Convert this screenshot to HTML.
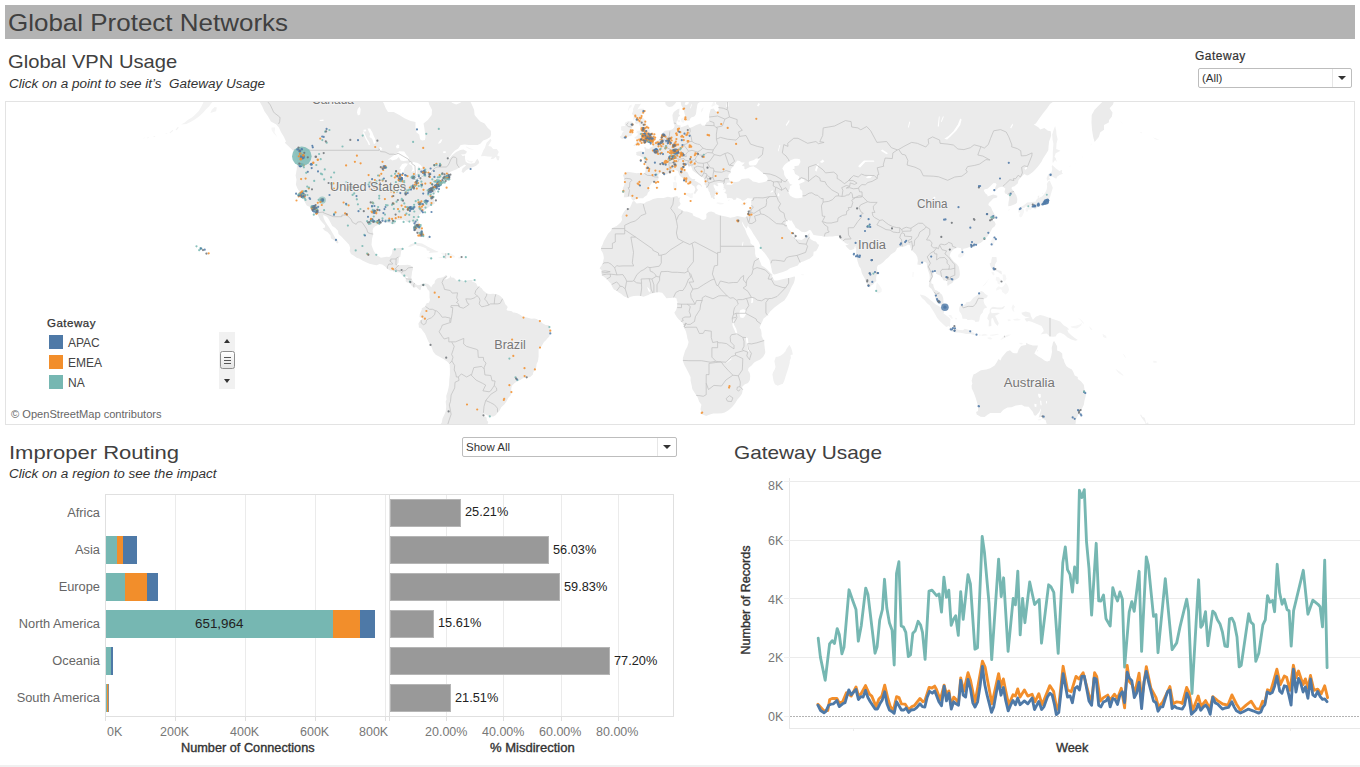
<!DOCTYPE html>
<html><head><meta charset="utf-8"><title>Global Protect Networks</title>
<style>
*{box-sizing:border-box;margin:0;padding:0}
html,body{width:1360px;height:767px;overflow:hidden;background:#fff}
body{position:relative;font-family:"Liberation Sans",sans-serif;color:#333}
.abs{position:absolute;white-space:nowrap;line-height:1}
#bar{left:5px;top:5px;width:1350px;height:34px;background:#b3b3b3}
#t1{left:7.5px;top:11.2px;font-size:24.5px;color:#404040;transform-origin:0 0;transform:scaleX(1.06)}
#t2{left:7.5px;top:53px;font-size:18.5px;color:#404040;transform-origin:0 0;transform:scaleX(1.09)}
#t2s{left:8.5px;top:78.2px;font-size:12.5px;font-style:italic;color:#333;transform-origin:0 0;transform:scaleX(1.078)}
#map{left:5px;top:101px;width:1350px;height:324px;border:1px solid #e3e3e3;background:#fff;overflow:hidden}
#gwl{left:1195px;top:50px;font-size:12px;color:#333;-webkit-text-stroke:0.2px #333;letter-spacing:0.5px}
.dd{border:1px solid #bdbdbd;border-radius:2px;background:#fff;font-size:11.5px;color:#333}
.dd .tx{position:absolute;left:3px;top:4px}
.dd .dv{position:absolute;right:18px;top:0;bottom:0;width:1px;background:#e6e6e6}
.dd .ar{position:absolute;right:5px;top:7px;width:0;height:0;border-left:4px solid transparent;border-right:4px solid transparent;border-top:4px solid #333}
#t3{left:8.8px;top:443.6px;font-size:18.5px;color:#404040;transform-origin:0 0;transform:scaleX(1.19)}
#t3s{left:9.3px;top:468.2px;font-size:12.5px;font-style:italic;color:#333;transform-origin:0 0;transform:scaleX(1.082)}
#t4{left:734px;top:443.6px;font-size:18.5px;color:#404040;transform-origin:0 0;transform:scaleX(1.124)}
.rl{font-size:12.5px;color:#666;text-align:right;width:95px;left:5px;transform-origin:100% 0;transform:scaleX(1.025)}
.al{font-size:12.5px;color:#777}
.at{font-size:12px;color:#333;-webkit-text-stroke:0.35px #333;transform-origin:0 0;transform:scaleX(1.06)}
.bl{font-size:12.5px;color:#222;transform-origin:0 0;transform:scaleX(1.02)}
#foot{left:0;top:765px;width:1360px;height:2px;background:#f0f0f0}
</style></head><body>
<div class="abs" id="bar"></div>
<div class="abs" id="t1">Global Protect Networks</div>
<div class="abs" id="t2">Global VPN Usage</div>
<div class="abs" id="t2s">Click on a point to see it’s&nbsp; Gateway Usage</div>
<div class="abs" id="gwl">Gateway</div>
<div class="abs dd" style="left:1198px;top:68px;width:154px;height:20px"><span class="tx">(All)</span><span class="dv"></span><span class="ar"></span></div>
<div class="abs" id="map">
<svg class="abs" style="left:-6px;top:-102px" width="1360" height="767" viewBox="0 0 1360 767">
<!--MS--><path fill="#f3f3f3" d="M211.8 109.8L214.7 107.1L216.9 107.6L216.1 111.3L210.4 112.9ZM204.7 84.3L203.3 102.8L201.6 106.0L199.0 110.8L194.8 115.0L191.9 117.5L187.7 120.1L184.8 122.6L181.1 124.5L186.3 124.0L190.5 122.1L194.8 119.6L199.0 116.5L203.3 112.4L206.1 109.2L209.0 106.6L211.3 103.3L213.2 101.1L213.2 84.3ZM216.9 84.3L217.5 100.6L218.9 101.1L221.8 99.4L223.2 84.3ZM175.5 129.8L177.7 127.0L178.9 127.4L176.6 130.3ZM169.5 132.7L172.6 129.8L173.2 130.8L170.3 133.2ZM164.9 134.1L167.5 132.7L167.2 133.6ZM152.4 136.9L155.3 136.0L155.0 136.9ZM146.5 138.3L148.5 137.1L148.5 138.0ZM143.1 138.3L144.8 137.4L144.5 138.3ZM1139.5 132.7L1142.0 132.2L1141.5 133.2ZM1152.8 137.4L1156.5 138.7L1159.4 139.6L1156.0 139.4ZM1120.2 121.1L1122.1 123.0L1122.7 124.0L1121.0 122.1Z"/>
<path fill="#f6f6f6" d="M466.4 159.4L469.8 161.1L473.2 161.1L471.8 162.9L468.1 161.7ZM466.1 146.4L473.2 149.4L474.1 149.9L468.9 149.0L466.1 147.2ZM271.5 127.4L275.2 127.4L274.6 132.2L277.2 136.9L273.5 133.2L271.5 129.8ZM437.8 257.4L439.7 258.3L442.2 258.0L445.7 259.2L447.6 257.8L449.9 257.7L450.8 257.1L454.2 257.8L455.2 256.7L454.2 255.4L452.5 254.5L450.5 253.5L448.5 253.0L445.7 252.9L442.5 252.7L440.8 253.0L442.5 254.5L442.8 255.8L443.8 256.8L441.1 256.9ZM426.8 257.5L429.2 256.9L432.6 258.0L432.6 258.7L430.0 259.2L427.2 258.0ZM458.4 256.9L462.8 257.4L462.1 258.4L458.4 258.6ZM473.5 280.0L476.1 279.6L476.1 281.6L473.5 281.6ZM426.9 237.1L428.3 236.7L428.9 239.6L427.8 240.5ZM206.0 253.2L206.6 251.7L208.7 252.9L209.5 253.9L207.6 255.3L206.4 255.1ZM204.1 249.6L205.6 249.6L206.1 250.3L204.7 250.6ZM199.6 247.7L200.7 247.3L201.5 248.5L200.2 248.5ZM195.3 246.0L196.5 245.6L196.8 246.5L195.9 246.8ZM680.9 119.1L682.6 117.8L684.3 117.0L685.2 119.1L684.6 121.1L684.0 122.6L682.9 122.8L681.2 121.6ZM677.2 120.1L679.8 120.1L680.1 122.1L678.3 122.3L677.5 121.3ZM700.8 112.4L701.4 109.2L703.1 107.6L703.6 107.4L702.8 110.3L701.6 111.9ZM711.3 105.5L712.4 103.9L713.3 101.7L714.7 102.2L715.6 104.9L713.3 106.0L711.9 107.1ZM629.5 105.5L631.8 104.4L631.5 107.1L629.5 108.2L628.3 111.3L628.1 109.2ZM684.6 194.3L686.0 193.2L687.4 192.8L690.6 193.6L693.7 192.5L692.6 195.4L692.8 197.2L692.3 198.2L690.3 197.9L687.7 196.1L685.4 195.2ZM672.7 182.5L675.5 181.4L676.9 182.9L676.9 186.3L676.6 189.2L675.2 189.2L674.7 190.3L673.2 189.6L673.2 186.6L673.2 184.0ZM676.1 174.9L676.4 176.4L676.1 179.1L675.5 181.0L674.4 180.3L673.8 178.7L673.8 177.2L674.9 176.0L675.8 175.8ZM716.1 203.1L717.6 202.3L720.4 202.8L722.7 203.0L724.1 203.5L722.7 204.2L719.8 204.4L716.4 203.3ZM741.1 204.2L742.8 203.5L744.8 203.0L747.7 201.7L746.0 204.0L744.8 204.7L743.1 205.6L741.4 205.2ZM656.0 187.9L657.9 186.4L659.2 187.4L658.2 188.8L657.0 188.3ZM714.7 190.1L716.1 190.3L718.1 191.4L719.3 193.2L717.8 192.8L715.9 191.4ZM728.1 200.2L729.6 199.1L729.2 200.7L728.4 201.0ZM722.8 189.2L724.4 188.5L724.9 189.8L723.2 189.9ZM1026.1 208.3L1027.8 207.3L1030.1 206.4L1031.8 206.9L1032.1 208.3L1030.7 210.0L1028.7 209.3L1027.2 211.9L1025.8 211.0L1025.5 209.3ZM1021.3 208.0L1023.6 209.0L1024.1 210.4L1024.1 211.7L1023.0 214.7L1021.8 216.7L1020.7 217.6L1020.1 216.7L1019.3 216.7L1019.3 214.4L1020.4 212.4L1019.3 212.4L1018.2 212.4L1017.9 210.4L1018.4 209.3L1019.9 208.8ZM1062.8 171.7L1065.0 169.0L1064.2 170.2ZM1067.0 167.8L1072.1 165.0L1069.9 166.6ZM1074.1 164.1L1077.0 162.1L1075.5 163.3ZM1081.2 158.8L1084.1 154.6L1082.6 157.1ZM1089.8 145.9L1092.6 142.4L1091.5 144.6ZM1007.8 210.0L1009.9 209.2L1009.9 210.0L1008.2 210.4ZM1042.0 193.6L1042.9 192.5L1043.2 193.6L1042.3 194.3ZM994.6 236.1L996.0 237.1L994.9 240.2L994.3 243.0L992.9 246.3L991.2 244.5L990.6 241.7L992.3 238.6L993.2 237.1ZM958.2 254.8L960.5 252.7L962.8 252.1L964.7 253.3L963.3 256.1L960.5 257.8L958.2 256.9ZM876.7 283.0L877.2 282.5L880.1 286.2L881.8 289.1L881.5 291.9L878.4 293.5L876.7 292.8L876.1 290.5L876.1 287.1L876.4 284.8ZM1005.7 282.5L1008.2 286.2L1009.1 289.7L1007.9 292.5L1005.7 294.5L1002.2 291.9L1001.7 289.7L1000.0 289.1L996.3 290.8L996.3 288.2L998.8 286.2L1001.1 287.4L1003.4 286.2L1004.5 284.8ZM1002.5 274.6L1005.4 274.6L1006.5 278.7L1005.1 281.3L1003.9 281.6L1002.8 279.3L1002.8 277.6ZM996.0 276.7L999.1 277.3L1000.3 279.6L1001.7 278.4L1000.5 281.9L999.4 284.5L997.7 283.6L997.1 280.7L995.7 280.4ZM982.4 286.6L984.6 283.9L987.5 280.7L989.2 278.1L988.0 280.4L985.5 284.2L983.2 286.2ZM991.2 271.7L993.7 272.0L994.6 274.4L993.4 275.5L992.0 273.8ZM969.6 330.4L973.3 330.1L973.3 331.0L969.9 331.0ZM948.3 315.0L951.1 315.0L952.8 317.8L952.2 319.3L950.0 317.3ZM955.1 317.8L957.1 318.1L956.8 319.5L955.1 319.3ZM974.7 333.8L978.1 334.1L976.7 335.6ZM978.9 334.4L980.9 334.4L980.4 335.8L978.9 335.6ZM981.2 334.7L984.6 333.8L987.5 334.7L987.5 335.6L981.8 336.1ZM990.0 334.7L993.2 334.4L998.3 333.8L998.8 334.4L993.2 335.8L990.0 335.6ZM987.5 337.6L990.3 337.3L992.6 339.0L990.3 339.6L987.5 338.4ZM1000.3 339.9L1003.1 336.7L1007.4 334.7L1011.1 334.4L1008.8 336.1L1004.5 337.9L1001.7 339.6ZM1070.7 326.4L1075.5 325.8L1079.8 324.4L1082.1 322.4L1081.2 325.5L1077.0 328.4L1072.7 328.1L1070.7 327.0ZM1077.8 317.8L1081.2 319.8L1084.1 323.2L1083.2 323.5L1080.4 320.1ZM1088.9 326.1L1092.0 329.0L1092.3 330.1L1090.3 329.2ZM1102.5 333.8L1106.2 336.1L1106.5 338.4L1103.1 337.0ZM1105.7 334.4L1107.9 337.3L1106.8 336.1ZM1011.6 307.6L1013.0 304.2L1015.0 306.8L1013.6 309.0L1014.5 311.9L1012.8 311.0L1011.9 309.0ZM1013.0 319.3L1017.3 318.4L1021.0 319.8L1018.7 320.4L1014.5 320.4ZM1007.4 319.5L1010.2 319.3L1010.8 320.7L1008.2 321.3ZM1115.3 368.8L1119.6 371.5L1123.8 375.5L1122.4 375.5L1118.2 372.7ZM1153.1 360.7L1156.5 361.0L1156.8 362.8L1153.4 362.8ZM1122.7 353.6L1124.4 355.0L1126.1 358.0L1124.4 356.5ZM912.7 271.7L913.6 272.3L913.3 277.3L912.5 277.0ZM800.8 274.5L804.2 274.4L803.4 275.2L801.4 275.1ZM1019.6 342.8L1023.0 343.1L1021.6 344.5L1019.6 343.9ZM1036.9 350.0L1038.3 350.0L1038.0 351.5L1036.9 351.2ZM1037.5 419.5L1040.3 418.8L1041.7 419.9L1038.6 420.6Z"/>
<path fill="#f0f0f0" d="M789.4 344.8L791.1 347.7L792.0 350.6L792.8 354.4L790.6 355.0L790.9 358.0L789.7 361.0L789.7 363.1L788.6 367.0L787.2 371.5L785.7 376.1L784.3 380.7L782.9 383.8L780.1 384.8L777.8 385.7L774.9 384.2L773.5 380.7L773.2 378.9L772.4 374.6L773.0 372.4L774.9 369.1L775.5 367.0L774.9 364.0L774.4 361.0L775.8 357.1L778.6 356.5L780.9 355.6L783.5 353.6L785.5 351.2L786.3 349.2L788.0 346.8ZM480.9 156.3L483.4 150.3L484.9 147.7L486.6 142.8L490.5 138.7L491.4 140.6L488.3 145.9L491.1 146.4L493.1 149.0L496.8 149.0L498.8 152.0L497.1 155.4L499.6 156.5L498.8 160.2L497.1 160.2L495.9 156.7L493.7 158.8L490.5 159.2L492.0 156.7L488.0 156.5L484.6 156.1ZM408.0 246.8L410.7 244.2L413.5 243.3L415.3 242.8L418.7 243.0L422.1 243.6L424.9 245.1L428.3 247.0L432.0 248.8L434.6 250.3L438.5 251.7L437.7 252.3L434.0 252.6L428.6 252.9L430.0 250.9L426.9 250.6L426.3 248.5L423.5 247.3L420.6 246.3L417.0 245.7L415.8 244.8L412.7 245.7L410.7 246.7ZM633.2 145.7L634.9 145.9L637.7 144.4L639.4 144.1L639.7 143.3L642.3 143.5L644.0 143.3L645.7 142.6L647.1 142.6L650.2 142.6L652.2 141.7L653.3 140.8L653.5 139.9L651.4 139.4L651.9 137.8L653.1 137.1L654.3 134.6L653.1 132.5L650.8 132.5L649.9 133.2L650.4 131.8L649.7 129.4L648.8 127.0L647.7 125.0L646.0 124.3L645.4 122.6L644.8 119.6L643.7 118.6L642.3 117.5L640.3 117.5L642.0 116.0L641.4 115.2L642.5 113.9L643.4 111.6L644.3 109.8L643.7 108.7L639.4 108.7L637.4 109.8L638.3 107.9L640.6 104.4L640.8 103.6L639.4 103.9L635.2 103.9L634.3 106.0L632.9 109.2L633.2 110.8L631.8 113.9L633.7 115.5L633.2 121.1L634.3 119.1L635.4 118.0L636.0 120.1L634.9 123.0L636.9 124.0L639.1 123.0L639.4 125.0L640.3 127.0L641.1 127.0L640.7 128.4L640.6 130.3L639.7 130.6L637.4 130.8L636.3 130.3L636.9 131.8L636.0 133.2L637.7 132.7L637.7 135.0L636.0 136.4L634.3 137.4L634.9 138.5L637.1 138.7L638.6 138.7L640.3 139.4L641.7 138.7L640.8 140.3L639.1 140.6L637.4 140.6L636.4 141.5L635.7 143.3L634.3 144.8ZM631.8 130.6L632.3 132.7L631.3 136.0L629.5 136.2L625.8 137.8L622.4 139.2L620.4 137.8L619.8 136.4L621.5 135.5L621.8 134.1L622.7 132.2L623.8 131.3L621.0 130.3L621.2 127.9L621.0 126.5L623.2 126.0L625.2 126.0L624.6 124.3L625.2 122.6L628.3 121.1L630.9 121.6L632.3 121.6L633.2 123.5L633.7 125.0L632.6 127.0L632.0 127.4L631.8 128.9ZM1049.7 180.6L1051.4 184.4L1052.8 187.7L1051.4 192.5L1050.0 197.2L1048.8 199.6L1049.7 201.7L1048.3 203.5L1046.8 204.5L1046.6 203.1L1046.6 202.1L1046.0 203.5L1044.6 203.8L1044.0 205.6L1042.9 204.2L1042.0 205.6L1039.2 205.6L1038.3 204.2L1037.5 205.6L1038.3 206.6L1036.6 208.0L1035.2 209.5L1033.2 208.0L1033.5 206.6L1034.1 205.4L1032.1 205.2L1030.1 205.6L1027.2 206.6L1025.5 206.4L1024.4 208.0L1021.6 207.8L1021.3 206.2L1022.7 206.1L1024.7 204.5L1027.2 202.4L1030.7 202.3L1033.5 201.7L1035.5 201.7L1036.1 200.0L1037.8 198.2L1037.8 196.1L1039.5 195.4L1038.6 197.9L1042.0 196.4L1044.0 194.3L1045.7 191.8L1046.8 189.2L1047.1 186.6L1046.8 184.0L1048.0 181.8ZM1047.1 181.0L1049.1 179.5L1050.5 179.5L1048.6 176.8L1050.0 176.8L1052.0 176.4L1056.2 178.7L1057.1 176.8L1059.6 174.9L1063.0 173.7L1061.9 172.5L1062.2 169.8L1059.4 171.0L1055.7 168.2L1052.8 165.4L1052.5 165.0L1051.7 166.2L1052.2 169.0L1051.7 171.4L1050.8 173.7L1048.6 173.7L1047.7 175.6L1046.6 178.0ZM1052.8 163.3L1055.1 160.0L1056.8 162.1L1055.7 158.0L1054.5 156.7L1055.7 153.3L1060.5 150.7L1056.2 149.0L1056.5 143.7L1057.6 139.2L1056.5 134.6L1056.2 130.8L1055.1 126.0L1053.7 129.8L1052.2 134.6L1052.5 139.2L1053.4 143.7L1053.1 148.1L1052.8 152.5L1052.8 156.7L1052.5 160.5ZM992.0 256.9L995.7 256.9L996.6 257.2L996.8 261.4L994.9 264.4L994.9 267.3L996.0 269.7L998.5 270.3L1001.4 270.9L1002.0 274.4L999.7 273.2L997.4 271.4L995.4 271.1L993.2 271.1L992.0 269.7L992.9 268.5L991.2 267.9L990.0 265.0L989.7 263.5L991.2 262.6L991.4 259.9ZM960.9 304.5L962.8 305.6L965.6 303.9L965.9 302.5L970.4 301.4L973.3 297.7L976.1 296.1L978.9 293.4L980.9 290.7L983.5 291.9L984.9 293.8L988.0 295.7L986.3 297.9L984.3 298.5L983.5 300.8L984.6 304.2L987.2 307.6L984.3 308.5L983.2 310.4L982.6 312.7L980.6 314.7L979.8 317.6L979.5 319.8L978.9 321.5L975.3 322.1L974.7 320.4L971.8 319.8L967.6 320.1L966.7 319.0L964.5 318.7L962.5 318.7L961.9 315.6L960.8 313.3L959.3 311.3L959.1 308.2L959.9 305.9ZM920.1 294.5L925.0 295.7L927.8 297.7L929.8 299.6L932.9 301.9L935.8 304.5L937.7 305.6L941.2 307.6L943.1 309.0L944.3 311.9L943.4 313.3L946.3 315.6L948.3 317.0L950.5 319.0L950.2 322.4L950.0 327.0L948.5 326.1L946.3 327.0L943.4 324.4L940.0 321.3L937.2 318.1L934.6 313.3L932.6 309.9L930.6 307.0L929.8 305.5L927.0 303.3L924.4 299.9L922.1 298.2L920.4 295.7ZM948.3 329.8L950.5 327.2L952.8 327.8L956.2 328.4L957.9 329.7L963.0 330.2L964.7 328.7L969.3 330.1L972.7 332.4L974.4 332.7L974.7 335.3L970.4 334.1L966.2 334.1L961.9 333.0L958.5 332.4L955.4 332.4L951.7 331.5L949.1 330.0ZM988.6 326.4L988.9 321.8L988.9 320.4L987.2 318.4L988.3 314.7L989.7 312.7L989.7 309.9L990.9 307.9L992.9 306.8L997.4 307.6L1001.7 307.6L1003.9 306.2L1005.1 305.9L1003.1 309.0L1000.3 309.6L994.6 309.0L991.7 309.0L990.6 311.0L991.7 313.3L994.6 313.0L997.4 312.7L1000.0 313.0L997.4 314.7L995.1 315.8L996.8 319.0L997.4 320.4L998.8 323.2L997.7 326.1L995.7 324.1L994.6 322.4L993.2 319.0L992.9 318.1L991.4 318.4L991.2 321.8L991.4 326.1ZM1021.3 312.7L1025.8 311.6L1030.1 312.7L1030.9 316.1L1032.9 319.8L1035.8 316.7L1040.0 315.0L1043.7 315.8L1049.1 317.8L1052.8 319.0L1057.4 320.4L1060.2 321.5L1063.6 325.2L1067.0 327.2L1069.3 329.5L1067.3 329.8L1068.4 332.4L1071.3 335.3L1074.1 337.6L1077.8 339.9L1075.5 340.7L1071.3 339.6L1067.6 337.6L1064.2 334.4L1059.9 332.4L1057.1 334.1L1055.7 336.4L1052.8 336.7L1050.0 336.4L1046.6 333.5L1042.9 334.1L1040.6 334.4L1043.7 331.0L1043.2 329.0L1041.5 326.1L1035.8 323.5L1031.5 321.8L1028.7 321.0L1026.7 321.8L1024.4 318.7L1028.7 317.6L1029.8 317.0L1025.3 316.7L1022.4 314.7ZM1140.0 414.8L1141.2 414.7L1142.3 416.7L1144.6 417.8L1145.4 420.2L1146.3 423.4L1148.0 422.3L1149.1 425.5L1150.8 426.3L1155.1 425.9L1156.2 427.3L1152.3 434.6L1145.7 434.6L1145.7 425.5L1145.2 422.3L1143.5 420.2L1141.7 417.8L1140.9 416.4Z"/>
<path fill="#ebebeb" d="M259.3 84.3L259.3 101.1L262.1 106.0L264.4 111.3L268.1 116.5L270.9 121.6L276.3 124.5L278.9 127.4L281.1 132.2L284.0 136.9L286.0 141.5L284.8 142.8L291.4 149.0L294.5 152.0L295.1 152.9L296.8 159.2L297.1 162.1L296.8 169.0L295.6 175.6L296.5 179.5L295.9 184.8L297.6 188.8L299.9 192.5L301.3 194.3L301.6 196.4L303.0 198.6L304.7 201.7L306.7 205.6L310.7 207.3L313.0 208.3L316.1 211.0L316.7 212.7L318.1 215.4L320.1 219.7L322.6 222.7L324.9 225.3L325.2 227.5L322.6 228.2L324.6 230.4L327.5 232.0L330.6 235.5L330.9 238.3L334.0 240.2L336.0 242.3L337.1 243.6L338.5 242.7L337.7 240.2L336.0 239.2L334.8 237.1L333.1 233.9L331.2 230.7L329.2 227.5L326.9 224.3L324.9 221.0L323.5 217.7L323.2 215.1L326.9 216.7L328.3 218.4L330.6 222.7L332.3 225.9L335.1 227.8L338.0 230.7L338.5 233.9L341.4 236.4L343.9 239.2L346.8 242.3L349.1 244.8L350.2 247.9L349.6 250.9L351.0 253.9L353.9 255.8L356.7 257.8L359.6 258.7L362.4 260.5L365.5 262.0L369.5 263.8L373.8 264.7L376.6 265.3L379.5 264.1L382.3 264.4L385.1 266.5L387.4 268.8L390.0 270.6L393.7 271.1L396.5 272.3L399.9 272.6L400.8 273.5L402.2 275.2L404.5 277.3L405.9 279.0L405.6 281.3L407.0 282.5L408.7 282.8L410.7 284.2L411.8 285.9L413.5 287.1L414.1 287.6L416.4 287.1L417.8 288.5L419.5 289.9L420.9 289.7L421.2 287.1L423.2 285.1L426.3 286.5L427.2 288.8L428.0 289.9L429.7 285.6L428.0 283.9L425.2 283.3L422.4 283.6L419.8 285.1L417.8 285.3L415.8 284.2L414.7 283.0L413.3 281.9L411.8 279.6L411.3 277.6L411.8 274.6L412.1 271.7L413.0 268.8L412.7 267.3L410.7 265.6L407.9 264.7L405.0 265.0L402.2 265.0L399.3 265.3L396.8 264.7L398.5 262.9L398.8 259.9L399.1 257.2L400.2 256.9L400.8 253.9L401.0 251.5L402.7 248.8L401.6 247.9L397.9 247.9L394.5 248.5L392.5 249.4L392.2 252.4L391.4 254.8L389.4 256.9L386.6 256.7L383.7 257.2L380.9 257.8L378.9 256.4L376.9 255.4L375.8 253.9L373.8 250.9L372.6 247.9L371.5 244.8L371.8 241.7L372.1 238.6L372.9 235.5L373.2 233.9L372.6 230.7L373.2 228.2L375.2 226.2L378.0 224.9L380.0 223.3L382.6 222.0L385.1 222.0L388.0 222.7L390.0 223.3L392.2 224.0L395.4 224.3L394.8 221.4L395.1 220.4L397.9 220.0L400.8 220.0L403.6 219.7L405.9 220.7L407.0 222.0L409.3 221.4L410.7 220.7L412.1 222.0L414.1 224.3L414.4 227.5L414.7 229.1L416.1 231.7L417.0 233.6L418.7 236.4L419.5 236.7L420.9 236.4L421.8 234.5L422.1 231.4L420.9 228.2L420.4 225.9L419.2 223.3L418.1 219.7L418.4 216.4L419.5 214.4L422.4 212.0L424.9 209.7L427.8 208.0L430.6 205.6L432.0 205.2L434.9 203.5L434.0 200.0L433.4 197.5L432.6 195.4L432.3 191.8L432.9 192.5L433.7 196.1L434.6 193.9L436.0 191.8L436.0 190.7L434.9 188.5L436.6 189.9L437.7 188.8L439.1 185.5L439.1 184.0L442.0 183.6L444.8 182.5L446.2 181.0L448.8 180.3L450.5 179.9L450.5 178.7L448.5 177.6L448.2 176.0L448.8 174.1L449.9 172.1L453.3 170.6L456.2 169.4L459.0 167.8L461.8 166.2L464.7 164.5L466.1 165.4L462.4 168.6L461.6 171.7L463.3 172.9L466.1 170.2L468.9 168.6L473.2 167.0L476.1 165.8L478.9 163.3L479.2 162.1L477.8 159.2L477.2 158.8L474.6 162.9L473.5 163.3L470.4 163.7L467.5 162.9L465.8 161.7L465.0 158.8L465.0 155.4L462.7 155.9L461.0 154.6L464.7 154.2L466.4 152.9L466.7 151.2L463.3 149.4L460.4 149.9L456.2 152.0L451.9 155.4L449.1 158.8L447.1 159.6L450.5 155.9L451.9 153.7L454.7 150.7L458.2 148.6L460.7 145.0L464.7 144.6L468.9 145.0L473.2 145.0L477.5 145.0L480.3 143.7L483.2 140.6L486.6 139.2L490.3 136.9L491.1 134.6L490.8 130.8L487.4 127.4L484.6 123.5L480.3 121.6L477.5 118.6L474.6 115.0L474.1 109.8L471.8 104.4L468.9 98.9L466.1 94.4L463.3 98.9L460.4 102.8L456.2 104.4L451.9 102.8L450.5 98.9L451.9 93.2L447.6 88.5L427.8 84.3L429.2 93.2L427.8 98.9L429.2 104.4L432.0 109.8L431.7 115.0L427.8 120.1L423.5 123.5L424.3 127.4L424.9 132.2L425.5 136.9L424.9 140.1L422.1 140.6L420.1 139.2L419.2 134.6L416.4 132.2L415.5 127.4L415.5 122.1L410.7 121.1L405.0 118.6L399.3 115.0L393.7 111.9L388.0 111.9L385.7 108.2L383.7 103.3L380.9 98.9L380.0 93.2L380.0 84.3ZM428.0 289.9L429.7 285.6L431.2 287.6L432.6 284.8L434.6 283.3L434.9 280.7L436.8 278.7L438.5 278.1L442.0 277.6L444.2 276.4L445.9 274.9L447.4 276.1L446.8 277.6L445.1 279.0L445.9 279.6L447.1 279.0L449.6 277.8L450.5 275.5L451.3 277.6L453.9 277.8L455.6 279.6L456.2 280.4L459.0 280.2L461.8 280.2L464.7 281.6L466.1 281.3L467.5 280.2L470.4 279.9L473.2 279.9L471.8 281.3L473.5 281.9L476.1 283.3L476.6 284.2L477.5 286.2L479.5 286.8L481.7 288.2L483.2 290.5L486.0 292.8L487.4 293.7L490.3 293.9L493.1 293.7L495.9 294.2L498.8 295.1L500.8 296.5L502.5 298.2L503.9 300.5L505.3 304.2L507.3 306.2L507.6 307.6L506.5 309.6L507.3 310.4L510.1 311.0L511.9 311.3L513.0 312.4L514.4 312.4L517.3 313.3L520.1 314.7L522.9 316.7L523.5 317.6L525.8 317.3L528.6 318.1L531.5 318.7L534.3 318.4L536.6 319.0L540.0 321.0L542.8 323.5L545.7 325.0L549.1 325.2L549.6 327.5L550.5 330.7L550.2 333.5L549.1 336.7L547.7 338.1L545.7 340.5L544.0 341.9L543.1 343.6L541.4 346.5L540.0 347.7L538.6 349.2L538.6 353.0L538.6 356.5L538.0 361.0L536.6 364.0L536.3 367.3L534.9 369.4L533.2 372.4L532.9 374.6L530.0 377.3L526.6 377.6L522.9 378.2L520.4 380.1L517.8 380.7L514.4 383.2L511.9 385.7L511.3 388.6L511.3 392.1L510.7 395.3L508.2 397.9L506.7 400.9L504.5 404.2L501.3 407.2L499.6 410.5L497.6 412.6L495.9 415.0L493.4 416.4L489.7 416.4L486.0 414.7L483.4 413.3L483.4 415.3L486.6 417.4L486.8 420.2L488.3 422.0L487.4 424.5L486.0 427.3L481.7 429.9L473.2 431.0L473.2 438.4L440.5 438.4L440.5 431.0L441.4 424.5L440.3 424.5L441.7 422.7L442.5 418.5L444.2 415.0L445.7 411.6L445.9 409.9L446.2 406.5L445.7 401.5L446.5 399.5L446.2 396.0L447.6 391.8L448.5 387.9L449.1 384.5L449.3 379.5L449.9 374.6L449.9 369.1L449.6 364.0L446.8 361.3L443.4 358.9L439.1 356.5L435.7 354.7L432.9 351.2L432.6 350.0L431.2 346.3L430.3 344.8L428.6 341.9L427.2 339.0L426.0 336.1L424.9 333.5L422.9 331.0L421.2 328.4L418.9 327.5L418.7 325.2L418.4 323.5L419.5 321.8L420.9 320.1L422.1 319.0L422.4 316.7L421.2 317.8L419.5 317.0L419.8 313.9L420.9 311.6L421.8 309.6L421.8 308.2L423.2 307.6L425.2 306.5L425.5 305.3L426.6 303.3L428.9 302.8L430.0 299.9L429.5 297.7L429.5 294.8L429.5 291.9L428.9 290.5ZM632.6 201.4L634.3 201.0L636.6 203.5L640.8 203.1L643.7 203.8L646.5 201.7L649.7 200.7L653.1 198.9L657.9 197.9L663.6 197.9L667.8 196.8L671.5 197.5L674.9 196.4L677.2 196.1L678.6 197.9L680.6 197.2L679.5 199.3L679.5 201.4L680.6 203.5L680.1 205.2L677.8 206.9L678.1 208.3L680.6 209.3L682.3 210.7L684.9 211.4L686.9 211.4L690.0 212.4L692.6 213.4L693.1 215.4L696.2 217.1L699.1 218.1L701.9 219.7L703.9 220.0L706.2 218.4L706.5 216.1L706.2 214.1L708.5 212.0L711.3 211.4L714.4 212.4L715.6 213.7L717.6 214.4L720.4 215.4L723.2 216.1L726.9 216.7L730.3 217.7L734.3 217.1L737.4 216.1L741.1 216.7L741.8 221.2L742.0 222.7L743.1 225.9L744.8 228.5L745.7 230.7L746.8 233.9L748.5 237.1L750.2 240.2L750.5 243.3L753.1 245.4L754.2 246.3L755.1 249.4L755.1 253.6L755.9 256.9L758.8 258.4L760.7 262.9L761.6 265.6L764.4 267.3L766.4 268.8L768.7 271.1L771.0 273.5L772.4 274.6L772.1 277.3L773.0 278.1L774.4 280.4L777.2 280.4L781.5 279.6L785.7 278.4L790.0 277.8L794.3 276.4L795.1 276.7L794.6 280.4L793.7 283.3L791.4 287.6L789.4 291.9L787.2 296.2L784.3 300.5L780.1 303.3L778.1 304.8L774.4 307.6L770.4 311.3L767.3 315.3L765.6 317.0L763.6 318.4L762.2 321.8L760.7 324.7L759.6 327.5L761.0 329.8L761.6 333.3L761.6 336.1L763.0 339.0L764.2 340.5L764.4 344.8L764.7 347.7L765.3 352.1L765.0 353.6L763.0 357.1L760.2 359.5L755.9 361.6L754.2 362.5L751.6 365.5L748.5 367.9L748.0 370.6L749.7 373.0L750.2 376.1L749.9 380.1L748.0 382.9L744.5 384.5L742.0 387.0L742.8 389.5L742.0 393.4L740.3 396.3L737.4 399.5L735.2 403.2L732.6 406.5L728.9 409.9L724.7 412.6L722.1 413.3L717.6 413.6L713.3 413.6L709.0 414.7L706.2 416.0L703.3 414.7L701.6 414.3L701.6 412.9L700.5 409.2L701.4 404.8L699.1 401.5L697.7 397.6L696.2 395.3L694.0 391.8L692.3 388.9L691.7 385.4L690.6 380.7L690.6 377.3L688.6 373.0L686.3 368.5L684.3 364.8L682.9 361.0L682.9 358.0L684.0 354.2L685.2 350.6L687.4 346.5L688.6 341.9L687.4 338.4L686.9 335.6L686.0 331.8L684.3 327.8L683.7 324.7L682.9 323.5L680.9 321.3L678.3 319.0L676.6 316.7L674.9 313.9L674.4 312.4L675.8 310.4L676.4 309.3L676.9 307.3L677.2 304.2L677.5 301.9L676.6 299.9L676.9 298.8L674.7 297.7L673.5 297.4L670.7 297.9L669.3 297.9L666.4 298.2L664.4 295.4L662.2 292.8L659.0 292.2L656.2 292.5L652.8 293.1L649.4 294.2L648.8 294.8L644.3 296.5L643.4 296.8L640.8 295.9L638.0 295.7L633.7 295.9L630.6 296.8L628.1 297.9L623.8 296.2L621.0 293.7L618.7 292.5L616.7 290.8L613.9 289.4L611.9 286.2L611.6 283.9L610.4 283.3L608.2 280.7L606.7 279.0L603.9 276.7L601.9 274.9L601.6 272.3L601.6 270.3L599.6 268.2L601.1 265.9L602.5 264.4L603.1 261.4L603.9 258.1L603.3 254.5L602.5 252.4L600.8 249.7L601.3 247.0L602.5 244.8L603.9 241.1L605.3 238.6L607.0 235.5L608.2 233.6L611.0 230.7L611.9 228.5L612.7 227.7L616.7 225.9L619.5 223.6L621.0 222.0L622.1 219.7L621.5 216.4L622.9 213.4L625.2 210.0L627.8 209.0L630.0 207.6L631.5 204.2ZM1132.4 78.2L1118.2 90.3L1115.3 96.1L1113.0 104.4L1109.6 108.2L1112.5 112.4L1111.9 116.5L1109.1 120.1L1108.8 122.6L1104.0 125.0L1104.0 129.8L1100.3 132.2L1098.8 136.9L1094.6 141.9L1093.2 136.9L1092.0 129.8L1091.5 122.6L1091.7 115.0L1094.6 109.8L1098.3 106.0L1102.5 101.7L1105.4 96.1L1106.8 90.3L1095.4 87.3L1089.8 98.3L1087.5 100.0L1082.6 101.7L1079.2 99.4L1072.7 98.3L1064.2 99.4L1055.7 100.0L1050.0 103.9L1047.1 108.2L1042.9 113.4L1040.0 117.5L1035.8 123.5L1033.8 124.5L1038.6 127.4L1040.3 129.4L1044.3 127.9L1048.0 130.8L1050.8 131.3L1051.1 135.5L1050.5 137.8L1049.1 141.5L1048.6 145.9L1048.3 150.3L1045.7 154.6L1042.9 158.8L1041.5 161.7L1038.6 165.8L1035.8 169.0L1032.9 172.1L1028.7 174.9L1027.0 175.6L1024.4 174.1L1021.6 176.4L1020.7 177.6L1018.4 180.6L1017.9 183.3L1014.5 186.3L1011.9 187.0L1011.6 188.8L1014.2 191.8L1016.4 195.4L1017.3 198.9L1017.0 202.4L1015.9 203.8L1013.0 204.9L1010.2 205.9L1008.2 206.2L1008.5 202.4L1009.1 198.9L1009.1 196.1L1007.4 194.3L1005.1 193.6L1004.5 191.4L1005.4 188.8L1002.8 186.6L998.8 187.4L996.0 189.9L994.0 190.7L995.1 188.1L996.6 184.4L995.4 182.9L993.2 183.3L990.3 186.3L987.5 188.8L984.6 189.2L983.8 190.7L985.5 193.6L987.5 195.0L987.5 196.4L990.3 195.4L993.2 194.6L997.4 195.7L997.1 197.5L993.2 198.6L991.2 200.7L988.9 203.1L988.3 204.9L990.9 206.9L992.6 211.0L994.6 214.4L995.7 216.1L995.4 218.1L993.2 219.1L991.7 220.0L994.6 221.4L995.7 224.3L994.6 226.6L992.3 228.2L990.9 231.0L989.2 233.9L987.5 236.4L985.2 238.6L982.4 241.4L980.4 243.0L977.0 244.2L974.1 245.1L971.8 245.7L969.0 247.3L966.2 248.2L963.3 248.8L962.8 251.2L961.3 250.6L961.0 248.2L957.6 247.6L956.2 247.9L953.4 249.4L952.5 250.3L950.5 253.0L949.7 256.1L951.7 259.0L953.9 261.7L956.8 264.1L958.8 266.7L959.6 270.9L959.9 274.6L959.1 277.6L956.5 279.3L953.7 280.7L952.5 282.8L949.1 284.8L947.7 285.9L947.1 283.3L947.7 281.6L946.3 280.7L943.4 280.2L942.0 277.6L940.0 275.5L937.7 274.4L936.0 273.8L936.0 272.0L934.9 271.7L933.5 272.3L933.3 274.6L932.9 276.7L931.5 279.6L931.2 283.3L933.2 284.2L933.5 286.2L934.9 289.7L937.7 291.1L939.7 292.8L942.0 294.8L943.1 297.4L943.4 299.6L943.4 302.8L944.9 304.8L945.7 306.5L944.3 306.8L943.1 306.2L940.6 304.5L937.5 302.2L935.5 299.1L934.6 295.4L934.3 292.8L932.6 290.8L931.5 288.8L929.8 287.6L928.7 286.2L929.2 283.0L929.5 281.0L929.8 277.6L929.5 274.6L928.1 270.6L927.0 266.5L926.7 262.9L924.7 261.7L922.7 262.6L920.4 265.0L917.3 264.4L917.9 260.5L917.3 256.9L915.6 253.9L913.3 251.8L911.6 250.0L910.5 247.9L910.2 245.4L907.9 244.5L906.5 245.4L905.1 246.3L902.2 247.0L900.0 247.0L897.1 247.9L896.3 250.0L895.1 251.8L893.1 253.0L890.9 254.5L888.3 257.5L886.0 259.3L883.2 262.3L880.1 264.4L878.1 265.0L876.9 267.3L877.2 270.3L877.5 272.9L876.4 276.1L876.1 279.0L876.4 281.0L874.4 282.5L873.8 283.9L871.5 285.3L869.7 287.4L867.9 286.2L866.1 282.2L864.7 278.4L862.5 274.6L861.9 273.2L860.8 268.8L859.0 265.9L857.6 261.4L856.5 256.9L856.2 255.4L855.9 252.4L856.2 249.1L855.4 247.3L855.6 245.4L854.5 247.0L854.2 249.1L851.1 250.0L849.4 249.7L847.1 247.6L845.4 245.4L848.2 244.5L849.1 243.6L847.4 243.9L845.1 243.0L843.7 241.4L842.9 240.8L841.1 239.9L839.7 237.7L838.6 236.1L835.5 236.1L832.6 236.4L829.8 236.4L826.4 236.7L824.1 236.7L821.5 236.1L818.4 235.8L815.6 235.2L813.6 234.9L811.9 232.3L811.0 230.4L809.3 230.1L807.1 231.4L804.8 232.3L801.4 231.7L798.8 229.5L795.7 227.8L794.3 224.9L792.8 222.7L791.7 220.4L790.0 220.7L788.6 219.7L787.4 221.0L785.7 221.4L785.6 223.0L786.3 224.6L787.2 226.2L788.0 228.5L790.3 230.7L791.7 232.3L792.0 234.9L793.7 237.7L793.7 235.5L794.3 233.6L796.0 234.5L796.0 237.1L795.1 238.6L796.0 239.6L798.8 239.6L801.7 239.9L803.9 238.6L806.5 236.1L808.5 233.9L809.6 232.6L809.3 235.2L809.6 237.4L810.7 239.2L813.6 241.1L815.9 241.4L817.8 244.2L819.3 244.8L817.8 248.2L816.1 250.9L813.6 251.8L813.3 255.4L809.9 258.4L806.5 259.9L803.1 261.4L799.9 262.6L797.7 265.6L794.3 266.7L790.0 268.2L787.2 270.3L782.9 272.0L778.6 273.2L777.2 273.8L774.4 274.4L773.0 274.1L772.1 272.3L771.5 268.8L771.3 267.9L770.7 265.3L770.1 262.9L769.5 259.9L767.8 257.5L766.1 255.1L764.4 252.7L761.9 250.3L760.7 247.9L759.9 244.8L758.2 241.1L757.3 239.9L755.1 236.4L753.4 233.9L751.6 230.7L750.2 228.8L748.8 227.2L748.2 225.9L748.8 222.7L748.0 224.9L747.1 227.5L746.7 228.4L744.8 226.6L743.7 224.6L742.3 222.0L741.8 221.2L741.1 216.7L744.5 217.4L746.5 216.7L748.2 214.1L748.8 211.7L750.2 208.0L751.4 205.2L751.1 202.4L751.4 200.7L752.2 198.6L750.2 198.6L747.7 197.9L745.1 200.0L742.6 200.7L740.3 198.9L736.6 197.5L736.0 199.6L733.7 200.0L732.0 198.2L729.5 197.9L727.2 198.2L726.9 197.2L726.6 193.9L724.1 192.5L725.5 191.8L725.8 189.9L724.9 188.8L723.5 188.1L723.8 186.3L723.2 184.0L723.0 183.3L720.4 182.9L718.7 182.9L717.0 183.6L718.4 185.5L717.3 186.3L715.9 185.5L714.7 184.4L713.6 184.8L713.6 186.3L714.4 188.1L715.3 189.6L714.4 190.3L716.1 191.8L717.6 192.8L717.7 194.8L716.4 193.9L714.7 193.9L715.3 195.4L715.0 196.1L714.1 195.4L714.7 197.9L715.0 199.1L713.3 198.9L712.2 197.2L711.0 197.9L710.7 195.4L709.9 194.3L709.9 192.8L709.3 192.1L708.5 190.7L708.2 188.8L706.8 187.7L706.2 187.0L705.9 185.5L704.5 184.4L704.5 181.4L704.5 179.1L703.1 177.6L700.8 176.4L698.5 174.5L696.0 172.9L694.5 172.1L692.6 170.6L691.7 167.8L690.3 165.8L688.9 167.8L688.0 165.0L686.3 164.1L684.3 165.4L684.3 169.0L685.2 171.0L687.7 172.5L689.1 176.0L691.1 178.3L692.6 179.1L695.4 179.1L694.5 180.6L697.4 182.1L700.5 184.0L701.9 185.9L701.6 187.0L700.2 185.1L698.2 184.4L696.5 186.3L696.5 188.1L698.0 189.9L696.5 191.8L695.1 193.9L693.8 193.2L694.5 191.4L695.4 189.2L694.3 186.3L692.0 185.1L691.4 184.0L690.0 183.3L688.3 181.8L685.2 181.0L684.0 179.5L682.6 178.0L680.9 176.8L679.2 174.9L678.6 172.9L677.8 171.0L674.7 169.4L672.7 171.4L670.7 171.7L669.0 172.9L667.0 174.5L664.7 173.7L662.4 173.3L660.4 172.9L658.5 174.5L658.2 176.8L658.5 179.1L655.6 181.4L652.8 182.1L651.4 183.6L649.4 186.6L648.5 188.5L649.9 190.7L647.9 192.5L647.1 195.0L644.0 197.2L643.1 198.2L640.8 198.2L636.9 198.2L634.3 200.3L633.5 200.7L631.5 198.9L631.2 197.2L629.5 196.4L626.9 197.2L623.8 197.2L624.4 193.6L623.2 191.0L622.7 188.5L624.1 185.5L624.6 182.1L624.1 178.3L622.9 174.9L625.5 173.3L627.5 171.7L632.3 172.5L636.6 173.3L638.6 172.9L640.8 173.3L644.3 173.3L645.1 172.9L645.7 169.0L646.0 165.0L646.2 164.5L646.0 162.1L644.3 160.9L643.1 158.0L641.4 156.7L639.7 155.9L637.1 155.4L636.0 154.2L636.6 152.9L635.7 152.5L638.3 151.6L640.8 151.2L643.7 151.8L645.1 151.8L644.8 149.4L644.0 147.2L645.7 147.2L646.2 148.6L649.4 149.0L649.7 148.1L652.5 146.4L653.9 145.0L653.9 142.8L654.8 141.5L657.6 140.6L659.6 139.6L660.7 136.9L662.4 134.6L663.0 132.2L665.0 130.8L669.0 130.3L672.1 129.4L673.8 127.9L674.7 126.0L673.8 123.0L672.9 120.1L672.4 115.0L673.8 111.9L677.5 109.2L679.5 108.4L679.2 112.4L678.6 113.9L680.3 115.5L678.3 117.0L677.5 120.1L676.6 121.6L676.4 123.5L677.8 125.0L680.6 125.5L680.3 127.4L683.5 126.5L686.3 125.5L688.0 124.5L689.7 127.9L693.4 126.5L696.2 125.0L700.5 123.5L702.2 125.5L704.8 125.5L705.9 124.0L706.2 122.8L709.0 121.1L709.3 119.1L709.0 115.0L710.2 110.8L710.7 109.2L713.6 108.4L715.3 110.8L717.6 112.1L718.7 109.8L718.7 105.5L716.1 103.9L716.1 100.6L719.0 98.9L723.2 98.3L728.9 97.8L734.6 96.1L734.6 78.2ZM662.2 78.2L663.6 90.3L663.6 96.1L664.4 100.0L665.3 102.2L665.6 104.4L667.8 106.6L669.3 107.1L672.1 106.6L674.4 104.4L676.6 101.7L679.2 100.6L679.5 96.6L680.6 101.1L681.2 104.9L683.2 108.7L684.3 112.4L685.4 116.5L685.4 117.5L686.3 120.1L687.2 120.8L689.7 120.6L690.0 119.1L691.1 117.5L693.7 116.8L694.8 116.0L696.0 113.9L696.5 109.8L696.8 108.2L697.4 104.4L698.0 103.3L700.5 101.7L701.9 100.0L703.1 97.2L701.9 93.2L700.5 78.2ZM1054.2 341.0L1057.1 346.3L1057.1 350.6L1059.9 351.5L1062.2 353.6L1062.5 358.0L1063.6 359.2L1064.5 362.5L1066.5 366.2L1069.0 367.9L1071.9 369.4L1073.3 372.0L1074.7 375.5L1077.8 377.0L1077.8 378.9L1080.9 381.3L1083.8 384.8L1084.4 388.6L1084.4 391.8L1085.8 395.5L1084.4 400.9L1083.8 404.8L1081.8 408.9L1079.2 412.9L1078.1 415.0L1076.1 419.2L1075.5 424.1L1075.3 425.5L1069.9 427.0L1065.6 431.3L1061.3 428.8L1060.5 428.4L1057.1 430.2L1051.4 428.4L1048.3 427.0L1046.6 423.7L1045.7 420.2L1042.9 418.8L1041.7 418.8L1042.9 416.0L1041.5 414.0L1040.9 417.1L1038.6 417.4L1040.0 413.3L1040.9 410.5L1040.9 408.2L1039.2 411.9L1035.8 415.7L1034.1 415.3L1032.9 411.9L1030.7 409.2L1028.7 406.8L1024.4 406.5L1021.6 404.8L1015.9 405.5L1011.6 407.2L1007.4 407.5L1003.1 409.9L1000.5 412.9L996.0 412.9L990.3 413.1L987.5 414.7L984.6 416.9L980.6 416.7L976.7 414.5L976.1 411.9L978.0 410.9L978.2 406.5L977.0 402.5L975.8 398.2L975.0 396.0L973.8 392.7L971.8 388.6L971.6 385.4L972.4 383.5L971.6 380.7L972.7 376.4L973.8 373.9L975.0 373.9L976.1 373.3L980.9 370.3L986.3 369.4L990.3 368.2L994.6 365.5L996.6 362.5L998.5 358.9L1000.5 360.4L1001.7 357.4L1004.2 354.4L1006.8 351.5L1009.9 350.3L1013.0 353.0L1014.5 353.3L1017.3 353.3L1018.7 349.2L1021.1 346.1L1023.0 345.4L1026.1 345.1L1026.1 342.8L1028.7 344.2L1032.9 345.4L1038.0 345.4L1037.2 348.3L1035.5 351.2L1034.3 353.6L1038.0 356.2L1041.5 358.3L1044.9 360.7L1047.1 361.6L1049.7 360.7L1051.1 356.5L1052.0 352.1L1051.7 347.7L1052.5 344.8L1053.1 341.9Z"/>
<path fill="#fff" d="M387.7 160.0L390.8 159.2L392.2 160.5L396.5 159.2L398.8 157.1L400.8 160.5L403.6 160.9L407.9 160.5L409.3 160.9L408.7 157.5L406.4 155.0L404.2 151.6L399.3 151.2L396.8 152.9L393.7 155.4L390.8 157.5ZM399.9 179.9L401.9 180.3L403.6 178.7L404.5 174.9L403.6 171.0L405.0 167.4L406.7 165.8L407.9 163.7L405.0 163.3L402.2 164.1L400.5 166.6L399.3 168.6L400.8 169.0L400.2 172.9L399.6 176.8ZM408.7 163.7L412.1 165.8L412.7 169.0L411.3 172.1L413.8 171.0L415.3 174.9L417.2 173.3L417.2 169.0L418.4 166.2L420.6 168.6L422.6 167.8L420.6 165.0L417.8 162.9L413.5 162.1L410.7 161.7ZM412.4 179.9L415.0 181.0L417.2 180.6L420.6 178.7L424.9 176.0L425.2 175.3L422.1 176.4L419.2 176.0L416.4 178.0L413.5 178.7ZM422.6 173.7L424.9 173.7L427.8 173.3L430.6 173.7L432.6 172.5L432.6 170.6L429.2 171.0L426.3 171.4L423.8 172.5ZM374.3 144.1L375.8 142.4L375.2 138.7L373.8 136.0L372.3 132.2L370.1 128.4L367.5 128.4L368.7 131.3L370.1 134.1L369.5 136.9L372.1 138.7L373.2 141.5L373.8 144.1ZM370.1 145.0L369.2 141.9L367.2 139.2L365.5 135.5L364.1 132.2L362.7 132.2L364.4 136.0L365.8 139.2L367.5 141.9L368.7 145.0ZM396.8 148.6L399.1 148.1L399.3 145.0L397.4 144.6L395.9 146.4ZM357.9 115.5L360.1 114.5L360.7 109.2L359.6 106.6L357.6 109.2L357.0 112.4ZM331.7 103.9L336.8 101.7L342.5 100.0L348.2 100.0L348.2 101.1L342.5 102.2L336.8 103.3L333.4 104.9ZM378.6 150.3L380.9 150.7L382.3 148.6L380.6 146.8L378.9 148.1ZM443.1 152.9L445.7 152.9L445.7 151.2L443.4 151.2ZM438.3 144.1L440.8 142.8L442.5 139.6L440.8 139.6L438.5 142.4ZM363.5 131.8L366.4 131.3L365.8 129.4L363.5 129.8ZM319.8 121.1L323.5 121.1L323.5 119.6L319.8 120.1ZM405.3 276.4L407.3 276.4L408.4 278.7L406.4 278.4ZM739.4 312.7L740.3 309.9L743.1 309.3L746.0 309.9L746.8 311.6L746.0 313.9L744.5 316.7L743.1 318.1L740.3 317.6L739.7 314.7ZM732.0 320.1L733.5 320.1L734.0 324.7L736.3 329.0L737.7 335.0L736.0 334.1L734.6 330.4L732.6 326.1ZM745.7 337.6L747.7 337.9L748.5 343.3L749.1 347.7L749.7 351.5L748.0 351.2L747.1 346.3L746.3 341.9ZM736.0 307.3L738.6 304.2L738.0 303.9L735.5 306.8ZM751.1 303.3L753.1 302.5L753.1 297.9L751.6 297.7ZM649.4 292.5L650.2 290.5L648.8 288.2L647.1 287.1L647.7 289.1L648.5 291.1ZM726.1 362.2L731.2 358.3L731.5 359.2L726.9 362.8ZM741.7 246.3L742.8 241.7L743.4 241.7L742.8 246.3ZM732.0 181.8L736.0 182.1L738.9 181.4L741.7 179.1L744.5 178.7L748.8 178.3L751.6 180.3L752.8 181.4L755.9 182.1L758.8 182.9L762.2 182.5L765.9 181.4L767.6 180.3L767.8 178.0L765.9 174.9L763.0 173.3L762.2 172.5L758.8 169.8L756.8 168.2L754.5 167.0L753.4 166.2L749.9 167.0L747.4 168.2L745.1 169.4L744.3 168.6L744.5 166.6L741.7 165.4L743.7 163.7L744.8 162.5L741.7 162.5L739.7 160.9L737.4 160.5L735.2 163.3L733.7 165.8L731.5 168.2L730.6 170.2L730.6 172.9L728.9 174.1L728.1 176.8L728.9 178.7L729.5 180.6ZM753.4 165.6L755.9 165.0L757.3 162.9L758.8 160.0L761.0 158.4L758.2 158.4L755.9 158.6L753.9 160.0L749.9 161.3L748.8 162.1L748.8 164.1L749.9 165.6ZM726.1 184.4L727.5 182.7L731.5 182.5L733.7 183.5L731.8 184.8L728.4 184.8ZM784.3 174.9L786.6 178.7L788.6 181.4L790.0 184.0L792.6 184.8L790.0 185.9L789.7 188.5L788.3 192.1L790.0 195.4L792.8 197.2L795.7 198.2L798.5 198.2L802.5 197.5L802.5 194.3L802.2 191.0L799.9 188.8L799.9 186.3L799.1 184.0L801.4 182.9L804.5 181.8L804.5 179.5L801.4 178.7L799.7 180.3L798.5 179.9L799.4 176.8L797.4 175.3L795.1 174.1L794.0 170.2L792.3 169.4L794.8 168.6L794.3 166.2L798.5 165.4L800.5 162.1L799.9 159.2L797.1 158.8L794.3 158.8L790.0 160.5L788.6 161.7L785.7 163.7L783.8 165.8L782.3 168.6L783.8 171.0ZM815.0 170.2L816.7 165.0L818.7 163.3L817.8 167.8L816.4 171.7ZM819.8 162.1L822.7 159.6L824.4 161.3L822.1 162.9ZM944.3 138.7L947.1 139.6L950.5 136.4L956.2 130.8L960.2 125.0L961.6 119.6L960.2 118.6L957.9 124.5L953.4 131.3L948.5 136.0ZM858.5 165.8L861.0 163.3L863.9 160.5L868.1 160.5L873.8 160.5L874.4 161.7L868.1 161.7L865.3 162.1L862.5 165.0L860.2 167.4L858.5 167.0ZM865.9 177.6L869.0 175.6L872.1 176.0L870.4 178.0L867.6 178.3ZM770.1 192.5L772.4 189.9L773.2 191.8L771.3 192.5ZM777.5 196.1L778.1 192.8L779.5 194.3L779.2 196.4ZM1024.4 168.6L1026.7 166.2L1027.0 168.6L1025.5 169.8ZM932.6 198.2L934.3 196.4L935.8 197.9L934.1 198.9ZM684.6 104.4L686.3 100.0L689.1 101.1L688.3 103.9L686.3 104.9ZM690.0 108.2L691.4 103.9L692.0 104.4L690.8 108.2ZM786.6 126.0L789.4 121.6L789.2 119.6L788.3 121.1L785.7 125.0ZM757.0 105.5L758.8 102.8L759.9 104.4L758.2 106.6ZM777.8 151.2L779.5 145.0L780.3 145.0L778.6 151.2ZM937.7 126.5L938.9 116.5L939.7 116.5L938.9 126.5ZM940.9 121.6L943.1 116.0L943.7 117.0L941.7 122.1ZM907.9 127.4L909.3 121.6L910.2 122.1L908.8 127.4ZM1010.2 127.4L1012.5 123.5L1013.0 125.0L1011.1 128.4ZM880.9 150.7L886.6 154.2L888.0 153.3L882.3 149.4ZM726.1 107.1L726.9 102.2L728.4 102.2L728.6 106.6ZM1038.0 393.7L1040.6 394.0L1040.9 397.3L1039.2 397.9L1038.3 396.0ZM1040.0 400.5L1041.2 400.9L1041.7 405.2L1040.6 405.2ZM1034.3 403.8L1036.6 404.2L1036.3 407.2L1034.6 406.5ZM1046.0 400.9L1047.1 401.2L1046.8 403.8L1046.0 403.2Z"/>
<path fill="none" stroke="#bdbdbd" stroke-width="0.7" stroke-linejoin="round" d="M299.0 150.3L379.0 150.3L379.0 148.6L380.6 151.6L385.1 152.0L389.4 154.2L393.7 154.2L395.1 154.6L398.2 153.3L408.4 159.2L409.0 160.9L412.1 162.5L411.8 163.7L415.0 165.8L415.3 174.9L415.0 176.4L413.3 178.0L413.3 178.7L415.0 179.9L419.2 178.0L424.9 175.6L424.9 173.7L424.3 172.9L431.2 172.5L432.6 170.2L435.4 167.8L437.1 167.0L446.2 167.0L448.2 165.4L449.9 161.7L450.5 160.0L452.8 156.9L455.3 157.3L456.7 158.4L456.7 163.3L457.7 165.8L458.7 166.6L459.1 167.8M248.8 94.4L253.9 95.5L258.4 100.6L261.8 98.9L265.5 97.8L266.1 100.0L268.6 102.8L270.3 104.9L273.5 111.9L274.3 112.9L279.7 117.0L280.0 118.0L279.7 121.6L278.6 124.0M316.7 212.7L323.5 212.0L323.2 212.7L333.7 216.7L341.9 216.7L341.9 215.1L346.8 215.1L351.0 219.1L352.5 222.3L356.2 224.3L357.6 222.0L361.3 221.7L363.3 224.0L366.7 229.1L367.8 232.6L370.4 233.6L373.2 234.1M387.4 268.8L387.4 266.7L388.8 264.1L392.5 264.1L392.5 263.2L389.7 260.8L390.8 260.7L390.8 259.0L396.1 259.0L396.1 258.4L398.5 256.9M396.1 259.0L395.9 264.7L396.8 264.7M398.8 265.3L395.9 267.9L395.5 269.1L393.4 271.0M395.5 269.1L397.9 270.6L400.2 270.6L399.9 272.0M401.3 273.2L403.0 270.9L405.6 270.6L408.1 267.9L413.0 267.3M405.9 278.7L408.1 279.0L411.6 279.3M413.8 287.4L413.8 284.5L414.7 283.0M445.7 253.3L445.7 256.1L444.8 256.7L445.5 258.3M446.6 276.5L443.7 278.7L442.0 282.5L443.7 286.5L444.5 289.4L450.2 290.5L452.2 293.1L457.6 292.8L456.7 297.7L458.2 300.8L456.4 302.5L458.4 303.6L459.3 307.0M459.3 307.0L458.7 305.6L451.1 305.6L450.8 307.3L452.8 307.6L452.2 313.6L450.6 322.4M450.6 322.4L449.6 321.3L450.3 318.1L445.1 317.0L442.2 317.3L440.0 314.1L436.8 311.0L435.4 310.7M435.4 310.7L432.6 309.3L429.5 309.3L425.5 306.5M435.4 310.7L434.6 314.7L431.4 317.8L428.3 319.0L426.6 320.1L425.8 323.5L423.5 324.7L421.2 323.0L421.2 320.1M450.6 322.4L442.2 325.2L441.4 327.5L439.1 331.8L442.2 336.4L444.2 339.0L448.8 337.6L448.8 341.9L451.6 341.8M451.6 341.8L454.2 346.3L453.3 349.5L451.6 354.4L453.0 357.1L451.9 361.0L449.6 363.4M451.6 341.8L455.3 341.9L463.8 338.4L463.6 343.9L466.4 346.3L470.9 347.7L476.1 349.2L477.8 350.0L478.3 357.4L483.4 357.4L483.7 360.4L486.0 363.1L484.0 367.9L484.2 368.9M451.9 361.0L454.7 365.5L454.2 370.0L455.6 373.0L456.4 377.0L458.4 377.0M458.4 377.0L461.3 373.9L466.7 377.0L470.9 374.6L471.4 375.3M471.4 375.3L473.8 367.6L481.7 366.4L484.2 368.9M484.2 368.9L484.9 374.9L490.8 375.5L492.0 380.7L495.1 381.0L494.2 385.7M471.4 375.3L476.1 380.1L482.3 383.2L485.7 385.1L482.9 390.8L489.1 391.8L490.5 391.1L494.2 385.7M494.2 385.7L496.5 387.9L496.8 390.5L490.8 394.3L485.7 400.5M485.7 400.5L490.3 402.5L494.5 404.8L497.4 408.2L497.6 412.3M485.7 400.5L484.0 406.5L483.4 412.9M458.4 377.0L459.0 380.4L455.0 382.3L454.7 387.9L451.1 395.0L450.5 401.5L449.3 404.8L450.5 410.9L451.1 414.3L449.1 420.2L447.4 425.5L447.6 431.0M479.2 286.5L475.8 290.5L474.9 293.7L476.9 295.7M476.9 295.7L474.9 297.7L470.9 299.1L465.8 298.8L467.5 303.3L469.2 304.2L466.7 306.2L463.3 308.2L459.3 307.0M476.9 295.7L479.2 297.7L480.0 300.5L479.2 303.9L481.7 306.8L484.6 306.2L488.8 305.1M486.8 293.7L486.6 295.4L484.6 299.1L486.6 301.1L488.8 305.1M488.8 305.1L490.5 303.9L494.2 303.9M495.9 294.2L494.8 297.7L494.2 303.9M494.2 303.9L497.9 303.9L500.2 303.3L502.5 298.8M643.1 203.8L644.5 209.3L646.0 213.7L640.8 215.7L638.9 218.1L635.2 221.0L630.9 222.3L624.7 225.3L624.7 229.8M624.7 228.6L611.9 228.6M624.7 229.8L624.7 233.9L615.3 233.9L615.3 242.0L612.4 243.3L612.4 248.5L601.1 248.5M624.7 229.8L635.6 237.1L652.8 249.1L652.8 250.3L658.5 253.0L658.7 255.4L661.3 255.1M661.3 255.1L665.8 253.9L670.7 249.7L683.5 241.7M683.5 241.7L677.8 238.6L676.4 233.0L677.5 226.6L676.4 220.4M676.4 220.4L674.9 214.1L670.7 208.3L672.9 204.2L673.8 197.5M676.4 220.4L678.6 215.4L682.0 212.7L682.0 210.5M720.4 215.7L720.4 246.3L720.4 252.4L717.6 252.4L717.6 253.9M717.6 253.9L694.8 241.9L692.0 243.3M692.0 243.3L689.7 244.5L683.5 241.7M720.4 246.3L754.2 246.3M717.6 253.9L717.6 265.3L714.4 265.9L713.3 269.7L712.4 274.1L714.4 279.0M692.0 243.3L693.4 249.4L693.4 261.7L687.7 268.8L688.0 271.1M661.3 255.1L661.3 262.9L659.3 266.2L652.2 267.3L649.9 267.6M688.0 271.1L684.9 272.9L677.8 272.3L672.1 272.3L667.8 271.4L661.0 271.7L659.6 277.0M635.6 237.1L630.9 237.1L633.5 252.4L632.3 262.9L633.7 265.9L622.9 265.9L619.0 266.2L616.7 265.6L614.7 267.9M614.7 267.9L611.0 264.1L608.2 262.6L603.9 262.9L602.5 264.4M614.7 267.9L617.0 274.9M601.9 275.1L606.7 274.1L610.4 274.1L617.0 274.9M601.6 271.4L605.3 270.9L610.2 271.7L606.2 272.6L601.6 272.9M610.4 274.1L610.4 277.0L606.7 279.0M617.0 274.9L622.9 274.6L625.8 279.0L626.6 281.3M611.6 284.6L616.7 281.9L619.0 284.5L620.1 286.2M620.1 286.2L622.4 286.5L625.2 288.8L626.6 281.3M620.1 286.2L616.7 290.8M625.2 288.8L628.1 298.1M626.6 281.3L632.3 281.3L633.7 280.7M640.6 295.9L641.7 287.9L641.4 283.6L641.7 283.3M633.7 280.7L636.6 282.8L641.7 283.3M633.7 280.7L636.9 274.6L640.8 271.1L643.7 269.7L647.4 267.0L649.9 267.6M641.7 283.3L641.1 279.0L649.1 278.7L651.9 279.0M649.9 267.6L650.2 271.1L653.1 272.3L655.6 274.9L656.2 276.4M652.8 293.1L651.1 289.1L650.5 283.3L649.1 278.7M653.9 292.8L653.9 284.8L651.9 279.0M657.0 292.2L657.0 284.8L659.6 280.4L659.6 277.0M651.9 279.0L656.2 276.4L659.6 277.0M673.5 297.4L675.8 292.5L679.5 290.5L682.9 290.5L685.7 286.2L688.6 279.0L690.8 277.6L689.7 274.6L689.4 272.9L688.0 271.1M690.6 273.5L692.0 277.6L693.7 281.9L689.1 282.2L692.8 289.1M692.8 289.1L690.6 293.4L691.1 297.4L695.1 304.2M695.1 304.2L687.2 304.2L681.5 304.2L677.2 303.9M681.5 304.2L681.5 307.6L677.2 307.6M687.2 304.2L690.3 306.5L689.1 311.3L690.6 315.0L690.3 317.0L684.9 317.0L682.3 318.4L683.2 320.7L680.9 321.5M702.2 300.5L700.8 303.9L699.9 309.6L695.4 316.7L694.5 321.5L692.6 322.7L690.3 324.4L687.4 324.4L685.7 323.0L684.0 327.0M695.1 304.2L696.5 300.5L702.2 300.5M702.2 300.5L702.2 297.9L705.3 295.9L713.0 298.8L718.7 295.9L721.2 295.7L727.2 295.9M692.8 289.1L697.7 288.5L703.3 284.8L711.0 280.2L714.4 279.0M714.4 279.0L716.7 285.3L718.1 285.6L721.2 289.7L727.2 295.9M718.1 285.6L720.4 281.0L728.6 283.0L733.2 282.5L737.4 282.5L741.4 277.0L743.7 275.5L743.4 279.9L746.3 283.3L746.3 285.9M746.3 285.9L743.1 287.9L748.0 291.4L751.4 297.4M746.3 283.3L746.8 280.2L749.1 276.7L751.9 274.1L753.1 269.4M753.1 269.4L752.8 267.3L754.5 261.1L759.0 258.4M753.1 269.4L757.0 267.6L760.5 268.5L765.3 270.0L769.8 274.6M769.8 274.6L768.1 279.0L771.3 279.3L772.4 277.6M771.3 279.3L774.4 284.8L782.9 287.6L785.7 287.6L777.1 296.5L771.5 298.5L768.7 298.5L768.4 299.1M785.7 287.6L788.6 283.3L788.6 278.1M768.4 299.1L765.3 298.5L761.6 300.8L757.6 300.2L754.2 297.9L751.4 297.4M768.4 299.1L765.9 302.5L765.9 313.0L767.6 315.3M751.4 297.4L746.0 298.5L747.1 299.9L748.8 305.6L746.3 309.3L745.7 313.3M745.7 313.3L756.2 319.0L756.8 321.0L760.7 323.8M746.0 298.5L742.8 299.6L738.0 299.6L736.9 300.5M736.9 300.5L738.3 304.2L734.6 307.6L733.5 311.9L733.5 314.4M727.2 295.9L730.1 298.2L733.2 297.7L736.9 300.5M733.5 314.4L736.0 313.3L745.7 313.3M736.0 313.3L736.9 317.3L735.7 320.1L733.7 323.1M733.5 314.4L732.3 317.8L732.3 319.8L732.9 323.1M732.3 318.1L736.0 317.3M736.9 333.8L742.8 337.3L746.0 337.6M747.7 343.6L751.6 343.9L756.8 342.8L764.2 340.5M736.9 333.8L731.5 334.7L730.1 337.0L730.6 341.9L734.0 345.4L734.0 348.9L730.1 346.3L726.6 343.6L721.5 342.8L718.7 342.8L717.6 341.6M717.6 341.6L712.7 342.5L711.3 337.6L711.3 331.2L704.8 330.4L703.3 333.3L699.4 333.5L696.5 327.2L686.9 327.2L684.3 327.8M684.0 327.0L686.3 323.5L683.5 324.7M717.6 341.6L717.6 347.7L711.9 347.7L711.9 357.1L715.9 361.3M682.9 360.4L688.9 360.7L701.6 360.7L710.2 362.2L715.9 361.3L721.2 361.9M709.0 363.4L709.0 374.6L706.2 374.6L706.2 383.2L706.2 394.7M706.2 394.7L703.3 396.3L698.8 395.6L696.2 395.3M709.0 363.4L715.9 362.5L721.2 361.9M706.2 383.2L708.5 389.5L713.9 385.4L721.5 386.0L725.8 380.1L732.9 375.2M732.9 375.2L728.1 370.3L723.8 365.5L721.2 361.9M721.2 361.9L726.1 362.2L731.5 356.5L735.7 355.3M735.7 355.3L735.2 353.0L743.7 350.6M743.7 350.6L742.3 349.5L744.0 346.3L744.0 341.3L742.8 337.3M735.7 355.3L738.3 356.5L742.8 358.6L742.6 364.0L742.3 370.0L738.3 375.8M732.9 375.2L738.3 375.8M738.3 375.8L740.3 382.0L740.0 386.7L742.8 389.7M740.0 386.7L737.4 387.0L736.9 389.5L738.3 391.1L740.3 389.5M726.1 398.6L729.5 395.6L732.9 397.9L731.5 401.5L727.5 401.2L726.1 398.6M747.7 343.6L748.5 349.2L751.4 353.3L749.7 358.9L749.7 359.8L746.8 355.9L747.7 352.1L743.7 350.6M624.4 179.1L626.1 178.3L630.6 178.9L631.8 180.3L629.8 182.5L629.5 187.4L628.1 187.7L629.5 190.3L628.3 196.4M644.3 173.3L647.4 175.3L651.4 175.6L654.2 176.8L658.5 177.2M670.7 171.7L671.2 170.2L669.0 169.4L669.3 166.2L668.7 163.7L669.3 163.3M669.3 163.3L668.7 161.3L666.4 162.1L666.7 160.5L669.3 157.1L671.0 156.3M671.0 156.3L671.0 153.3L672.7 150.3L667.5 148.1M667.5 148.1L665.8 148.1L663.0 145.9L661.3 146.1L658.5 143.3L656.6 141.0M659.0 139.6L661.6 139.6L663.6 139.4L665.8 140.8L665.6 142.4L666.4 142.6M666.4 142.6L667.5 144.6L666.7 145.5L667.5 148.1M665.8 148.1L665.6 145.5L666.7 145.5M666.4 142.6L666.4 137.8L668.7 137.4L669.4 135.5L669.8 131.3M673.8 123.0L676.1 123.5M689.7 127.9L690.3 131.3L689.4 133.2L691.1 136.4L692.0 141.5M692.0 141.5L690.0 141.5L686.0 144.1L683.7 144.6L684.9 146.4L688.6 151.2M688.6 151.2L687.4 152.5L685.7 154.2L686.3 156.7L684.0 156.3L679.2 156.7L676.6 156.7M671.0 156.3L673.8 155.9L676.6 156.7M676.6 156.7L676.4 158.6L679.2 159.2M669.3 163.3L671.8 162.9L673.5 162.1L674.9 163.5L675.8 161.3L678.1 161.7L679.2 159.2M679.2 159.2L684.0 158.6L684.6 160.0L688.3 160.9M688.3 160.9L688.0 163.3L688.3 164.5M688.3 160.9L692.0 160.5L695.1 159.4M695.1 159.4L696.2 157.1L698.0 154.6M688.6 151.2L692.0 150.3L697.4 152.0L698.0 154.6M692.0 141.5L694.8 143.3L697.4 144.1L699.7 144.6L702.8 148.1M697.4 152.0L700.5 150.3L702.8 148.1M702.8 148.1L706.2 149.4L713.3 149.9M698.0 154.6L702.8 155.4L707.6 152.5L712.2 152.9M713.3 149.9L712.2 152.9L714.4 154.6M713.3 149.9L717.6 143.7L716.4 139.2L716.4 134.1L717.3 127.9L716.1 127.4L714.1 125.7L705.3 125.3M714.1 125.7L713.9 122.6L709.6 121.1M716.1 127.4L722.4 126.0L724.9 119.1M709.2 117.0L717.6 116.0L724.9 119.1M718.4 107.6L723.2 108.2L727.2 109.8M724.9 119.1L729.5 117.0L728.1 110.8L727.2 109.8M727.2 109.8L727.5 106.0L727.5 101.7L729.2 99.4M729.5 117.0L737.2 119.6L736.9 123.5L742.3 130.3L738.6 131.8L739.7 136.4M716.4 139.2L720.4 137.4L727.5 139.2L736.0 140.1L739.7 136.4M739.7 136.4L746.0 135.5L750.5 144.1L757.3 146.4L763.3 147.7L762.4 154.6L757.9 158.4M714.4 154.6L720.1 155.9L724.9 153.5L728.9 165.0L729.5 165.2L733.5 165.8M724.9 153.5L727.8 152.7L732.0 155.0L734.6 161.3L729.5 165.2M714.4 154.6L709.6 161.3L707.0 162.5M707.0 162.5L703.1 163.3L697.7 162.9L696.0 160.9L695.1 159.4M707.0 162.5L710.2 167.8L713.3 168.2L713.9 170.2M713.9 170.2L714.7 171.7L721.5 172.3L726.1 170.6L730.6 171.9M713.9 170.2L713.0 174.9L713.0 177.6L714.4 181.2M714.4 181.2L719.0 180.4L723.5 181.2L724.4 179.9L724.9 178.7L728.9 178.7M724.4 179.9L724.1 182.9L723.2 183.5M706.2 187.4L708.2 185.9L709.0 183.1L714.4 181.2M704.5 179.3L706.2 176.8L707.9 179.1L707.6 181.4L709.0 183.1M694.1 167.8L695.7 167.0L697.7 166.2L703.3 167.4L704.5 170.2L703.9 172.9L701.9 176.4L699.4 174.9L695.4 170.2L694.1 167.8M688.0 165.0L692.8 165.0L694.0 163.5L696.0 160.9M703.3 167.4L703.6 165.0L703.1 163.3M706.2 176.8L707.3 175.6L710.5 177.6L713.0 177.6M703.9 172.9L707.0 174.1L706.2 176.8M707.9 179.1L710.5 177.6M628.3 122.6L626.4 125.0L628.6 126.7L631.5 127.0M751.6 200.7L753.6 199.8L753.6 197.9L757.3 197.7L763.0 197.9L769.7 196.6L776.7 196.4L774.9 192.1L775.8 187.4L773.2 185.9L773.5 182.1L770.4 180.4L767.4 180.6M763.0 173.3L770.1 174.1L775.8 176.0L781.2 179.3M781.2 179.3L781.5 182.3L777.2 181.6L773.0 182.0M781.2 179.3L783.8 181.4L785.5 181.8L787.4 179.3M777.2 181.6L778.9 183.3L779.8 185.5L781.5 188.1L781.5 190.3M775.8 187.4L776.7 187.4L781.5 190.3L785.7 187.7L788.3 191.9M769.7 196.6L766.4 199.3L766.7 202.4L765.9 206.2L759.6 209.7M759.6 209.7L753.9 213.4L750.8 212.0M751.4 205.4L753.4 206.9L751.1 210.0M749.1 210.7L751.1 210.0L750.5 212.0L750.2 216.1L748.8 222.5M746.7 216.7L748.5 222.7M748.7 223.2L751.9 223.6L755.9 221.0L754.5 216.1L760.2 214.4L760.7 213.9M760.7 213.9L759.6 209.7M760.7 213.9L764.2 214.6L768.7 217.4L776.4 223.6L781.2 224.0L781.6 224.0M781.6 224.0L784.0 221.0L785.6 221.0M781.6 224.0L784.3 224.3L784.9 225.8L787.0 225.8M776.7 196.4L778.4 200.7L780.6 203.8L778.4 207.6L780.1 211.0L784.0 213.1L784.9 217.7L785.7 219.4L787.3 221.2M771.0 263.2L772.1 260.2L775.5 260.2L780.9 260.8L784.3 261.4L786.3 257.8L788.9 256.7L797.1 255.4M797.1 255.4L805.6 252.4L807.6 246.3L806.2 244.2M806.2 244.2L798.8 243.4L796.0 239.9L796.0 239.4M793.7 237.8L794.8 238.3M806.2 244.2L807.9 239.6L808.8 238.0L809.5 237.2M797.1 255.4L800.2 262.5M802.5 195.9L805.1 195.7L809.0 193.2L811.9 192.8L815.3 195.0L817.8 195.4L821.0 198.6L823.2 198.6L823.1 202.1M823.1 202.1L821.4 205.9L822.4 216.1L825.0 216.4L822.3 221.5M822.3 221.5L824.7 224.9L827.8 226.9L827.8 230.1L829.2 232.0L825.1 233.3L824.4 236.4M822.3 221.5L826.9 223.0L831.2 223.0L837.7 221.5L838.0 218.1L842.6 215.4L846.3 214.7L846.8 211.0L849.1 209.7L848.2 207.6L851.4 207.3L852.8 202.4L851.7 200.3L855.4 197.7L861.3 197.0L862.2 196.3M823.1 202.1L828.6 201.4L832.6 199.6L835.7 196.1L838.3 195.9L842.0 196.4L845.1 196.1L846.8 195.0L848.8 195.0L850.8 192.1L852.2 193.9L852.8 198.2L855.9 197.2L859.0 195.7L862.2 196.3M838.3 195.9L838.6 193.6L831.8 189.9L826.7 185.1L825.2 181.8L820.4 181.0L819.8 178.0L815.9 175.6L812.5 178.0L808.5 181.4M808.5 181.4L808.5 167.0L815.9 164.5L823.0 169.8L825.5 172.9L833.8 172.1L837.2 174.9L837.2 178.7L838.3 179.1L842.6 182.0L844.3 183.8L848.2 181.0L851.1 177.8M808.5 181.4L805.3 179.1L801.4 177.6L798.4 179.7M851.1 177.8L853.6 175.6L858.2 177.0L861.6 174.1L864.7 175.3L874.4 175.6L877.2 178.5M877.2 178.5L872.1 181.4L867.9 182.5L865.3 184.8L861.9 184.6L859.0 187.0L858.6 188.3M858.6 188.3L859.6 191.8L862.0 191.9L862.2 196.3M858.6 188.3L853.4 188.8L849.7 187.7L846.3 188.1L849.7 186.3M849.7 186.3L850.2 182.9L854.5 184.4L857.1 183.1L853.1 180.6L848.8 180.6L851.1 177.8M842.0 196.4L842.9 190.3L841.7 187.7L846.3 185.5L849.7 186.3M877.2 178.5L877.5 174.9L878.9 174.5L877.2 167.8L883.8 166.2L883.2 165.0L885.2 158.0L892.3 158.6L892.9 152.9L897.4 149.9M897.4 149.9L891.4 147.7L886.6 141.5L876.9 142.4L870.7 130.8L866.7 126.5L860.8 129.8L857.9 127.9L851.7 127.0L851.1 121.6L845.4 120.6L834.6 126.0L823.2 127.9L822.7 135.5L819.8 141.5L824.1 142.4L818.4 143.7L815.9 141.5L807.6 143.3L804.2 141.5L798.0 138.3L793.7 138.3L787.7 143.3L788.0 146.4L783.8 144.6L782.3 152.9L783.2 153.7L786.0 155.9L788.6 159.6L789.2 161.3M897.4 149.9L898.8 149.4L903.9 146.4L911.6 142.4L917.3 143.3L925.8 147.0L928.7 143.7L928.1 139.2L932.6 136.9L939.7 140.1L940.0 143.3L947.7 144.1L953.4 145.0L957.9 149.0L963.9 149.6L970.4 147.7L974.1 144.8L980.9 146.6M898.8 149.6L901.9 154.2L905.4 155.0L907.9 160.5L907.1 165.0L915.0 167.2L920.4 169.8L923.3 175.8L933.5 176.2L938.6 176.8L947.7 180.3L954.8 177.0L961.9 176.2L967.3 172.1L965.9 169.6L967.6 166.6L974.7 165.4L979.5 164.1L986.0 159.6L990.0 160.0L982.9 156.1L977.8 155.0L980.9 146.6M980.9 146.6L984.3 148.1L988.3 144.6L990.6 138.3L992.3 134.1L993.7 130.8L1000.5 129.6L1006.2 132.0L1008.8 136.9L1011.9 145.0L1011.6 146.8L1017.3 148.6L1020.7 150.7L1021.3 155.9L1026.1 155.6L1032.1 152.9L1031.8 155.9L1027.5 166.6L1024.1 165.8L1021.6 167.4L1022.4 172.9L1020.4 177.2M1020.4 177.2L1018.4 175.1L1015.6 178.7L1013.3 178.7L1013.9 180.6L1009.9 179.7L1005.4 184.0L1002.8 186.3M1007.6 194.5L1010.5 192.5L1014.0 191.4M956.2 247.7L952.5 246.3L952.0 243.6L948.5 242.3L947.1 243.9L944.6 244.8L940.6 244.0L939.6 245.1M939.6 245.1L938.3 248.9L936.8 247.7M936.8 247.7L933.8 247.9L931.2 246.0L932.1 243.0L929.8 240.2L926.5 239.9L929.8 234.2L929.8 229.1L926.1 226.9M926.1 226.9L922.7 223.3L918.4 223.3L911.0 228.2L909.9 228.2M909.9 228.2L906.2 227.2L902.5 228.8L901.9 229.8M901.9 229.8L902.2 231.4L905.9 231.2L911.0 231.0L911.0 228.2M899.8 227.8L901.9 229.8M899.8 227.8L896.3 227.5L892.9 226.6L888.6 224.6L886.0 222.7L882.6 219.9L879.6 220.4M879.6 220.4L876.9 224.9L880.1 226.4L886.0 229.6L890.0 230.1L893.1 232.0L897.4 232.6L899.7 232.5L899.8 227.8M879.6 220.4L874.4 217.4L873.0 216.1L872.1 212.4L875.0 212.4L873.5 209.3L873.3 206.2L877.2 202.4L870.4 202.4L867.6 201.7L863.9 198.0L862.2 196.3M843.1 241.1L844.8 239.2L851.1 238.9L848.5 234.9L848.2 227.8L853.6 227.7L857.9 221.4L861.3 217.4L861.0 214.4L863.3 213.4L860.8 211.7L859.0 207.6L860.5 204.9L867.6 201.7M902.4 246.3L901.9 242.7L901.4 239.2L899.7 238.0L900.5 234.9L901.9 232.6L904.5 233.9L904.5 236.1L911.9 236.7L911.3 239.2L908.5 240.2L909.1 243.0L911.6 241.1L912.5 246.3L912.5 248.5L911.6 250.3M912.5 246.3L914.2 245.7L914.7 240.2L918.1 236.4L919.8 232.0L925.0 228.5L926.1 226.9M933.8 251.4L930.6 253.0L927.2 256.9L930.4 263.2L928.4 266.7L931.2 272.6L932.3 276.7L930.1 280.7L929.5 281.9M933.8 251.4L936.8 247.7M933.8 251.4L934.9 253.9L936.9 253.9L936.6 259.9L939.5 257.8L944.6 257.5L947.1 260.2L947.1 263.2L949.4 265.6L949.1 269.1L948.3 269.2M948.3 269.2L942.0 269.4L940.6 271.4L941.2 274.6L941.7 277.1M948.3 269.2L950.5 269.2L954.8 268.2M939.6 245.1L942.0 249.7L946.6 250.9L944.9 253.9L948.3 256.7L952.0 261.7L954.8 264.4L954.8 268.2M954.8 268.2L954.8 275.2L950.2 277.0L950.8 279.0L948.0 279.3L946.1 280.7M933.8 292.1L936.6 294.2L939.5 292.8M960.8 304.6L963.3 307.9L968.1 306.3L973.0 306.5L975.5 304.2L978.4 298.2L983.5 298.5M1050.0 317.8L1050.0 336.4M1004.5 337.3L1004.4 336.0L1005.1 336.4"/>
<circle cx="301.8" cy="156.3" r="9.8" fill="#76b7b2" fill-opacity="0.82"/>
<circle cx="302.3" cy="156.8" r="2.6" fill="#4e79a7" fill-opacity="0.9"/>
<circle cx="300.3" cy="153.8" r="1.5" fill="#f28e2b" fill-opacity="0.9"/>
<circle cx="303.3" cy="155.3" r="1.4" fill="#f28e2b" fill-opacity="0.9"/>
<circle cx="299.8" cy="151.3" r="1.3" fill="#4e79a7" fill-opacity="0.9"/>
<circle cx="301.8" cy="149.3" r="1.2" fill="#4e79a7" fill-opacity="0.9"/>
<circle cx="300.8" cy="159.3" r="1.3" fill="#f28e2b" fill-opacity="0.9"/>
<circle cx="307.8" cy="157.3" r="1.1" fill="#6e7378" fill-opacity="0.9"/>
<circle cx="300.3" cy="165.8" r="1.8" fill="#4e79a7" fill-opacity="0.9"/>
<circle cx="304.3" cy="152.8" r="1.1" fill="#6e7378" fill-opacity="0.9"/>
<circle cx="298.8" cy="156.3" r="1.1" fill="#f28e2b" fill-opacity="0.9"/>
<circle cx="311.3" cy="164.3" r="1.5" fill="#4e79a7" fill-opacity="0.9"/>
<circle cx="313.3" cy="162.8" r="1.2" fill="#f28e2b" fill-opacity="0.9"/>
<circle cx="315.8" cy="156.8" r="1.3" fill="#6e7378" fill-opacity="0.9"/>
<circle cx="317.8" cy="159.8" r="1.2" fill="#f28e2b" fill-opacity="0.9"/>
<circle cx="312.8" cy="147.3" r="1.1" fill="#4e79a7" fill-opacity="0.9"/>
<circle cx="312.3" cy="145.8" r="1.0" fill="#4e79a7" fill-opacity="0.9"/>
<circle cx="322.2" cy="200.1" r="3.7" fill="#76b7b2" fill-opacity="0.6"/><circle cx="322.2" cy="200.1" r="2.1" fill="#6d8d90" fill-opacity="0.9"/><circle cx="322.2" cy="200.1" r="0.9" fill="#5a6f7a"/>
<g fill="none" stroke-linecap="round">
<path stroke="#76b7b2" stroke-opacity="0.35" stroke-width="8.4" d="M674.8 152.6h0"/>
<path stroke="#4e79a7" stroke-opacity="0.82" stroke-width="7.6" d="M944.9 307.2h0"/>
<path stroke="#4e79a7" stroke-opacity="0.9" stroke-width="6.8" d="M649 139.1h0"/>
<path stroke="#4e79a7" stroke-opacity="0.85" stroke-width="6.8" d="M650 139.6h0"/>
<path stroke="#4e79a7" stroke-opacity="0.9" stroke-width="6.4" d="M675.8 151.6h0"/>
<path stroke="#4e79a7" stroke-opacity="0.9" stroke-width="5.8" d="M439.1 183.6h0"/>
<path stroke="#4e79a7" stroke-opacity="0.92" stroke-width="5.4" d="M1046.3 201.8h0"/>
<path stroke="#4e79a7" stroke-opacity="0.9" stroke-width="5.2" d="M430.5 190.3h0M656 150.9h0M313.4 207.5h0M400.4 179.2h0"/>
<path stroke="#4e79a7" stroke-opacity="0.9" stroke-width="5" d="M447.5 177.3h0M301.5 194.4h0"/>
<path stroke="#4e79a7" stroke-opacity="0.9" stroke-width="4.6" d="M409.6 208.5h0M303.1 195.9h0"/>
<path stroke="#4e79a7" stroke-opacity="0.9" stroke-width="4.4" d="M435.8 186.4h0M374.3 211.8h0"/>
<path stroke="#6e7378" stroke-opacity="0.8" stroke-width="4.4" d="M647 137.6h0"/>
<path stroke="#4e79a7" stroke-opacity="0.9" stroke-width="4.2" d="M673.6 157.2h0M378.4 221.8h0M413.4 177.5h0M314.7 208.6h0M316.5 212h0M423.8 172.3h0"/>
<path stroke="#4e79a7" stroke-opacity="0.9" stroke-width="4" d="M419.7 203.4h0M300.8 164.9h0M431.7 188.9h0M425.9 201.5h0M351.1 187.2h0M371.7 220.1h0M415.1 227.7h0M421.5 234.7h0M674 145.4h0M440 182.3h0M384.4 167.1h0M418.1 225.8h0"/>
<path stroke="#4e79a7" stroke-opacity="0.92" stroke-width="4" d="M1044.5 203.1h0"/>
<path stroke="#4e79a7" stroke-opacity="0.9" stroke-width="3.8" d="M663.3 135.2h0M643 129.9h0M644 134.7h0M656 150.9h0"/>
<path stroke="#4e79a7" stroke-opacity="0.9" stroke-width="3.6" d="M682.3 154h0M669.1 141.7h0M661.7 142.1h0M647.1 137.4h0"/>
<path stroke="#4e79a7" stroke-opacity="0.92" stroke-width="3.6" d="M1047.5 200.2h0"/>
<path stroke="#4e79a7" stroke-opacity="0.92" stroke-width="3.4" d="M1038.3 205h0"/>
<path stroke="#4e79a7" stroke-opacity="0.92" stroke-width="3.2" d="M1034.8 206h0"/>
<path stroke="#4e79a7" stroke-opacity="0.9" stroke-width="3.2" d="M304.3 195.1h0M431.7 189.5h0M302.7 193.6h0M440.3 182.8h0M448.7 176.5h0M401.6 178.4h0M314.6 206.7h0M410.8 207.7h0"/>
<path stroke="#4e79a7" stroke-opacity="0.95" stroke-width="3.2" d="M944.9 307.2h0"/>
<path stroke="#4e79a7" stroke-opacity="0.9" stroke-width="3" d="M939.3 302.1h0"/>
<path stroke="#f28e2b" stroke-opacity="0.9" stroke-width="2.6" d="M301.6 196.7h0M408.1 209.3h0M446 178.1h0M398.9 180h0M429 191.1h0M300 195.2h0M311.9 208.3h0M437.6 184.4h0"/>
<path stroke="#4e79a7" stroke-opacity="0.92" stroke-width="2.6" d="M1042.7 204.2h0"/>
<path stroke="#4e79a7" stroke-opacity="0.92" stroke-width="2.4" d="M1050.6 174.8h0M1032.8 206.4h0"/>
<path stroke="#4e79a7" stroke-opacity="0.9" stroke-width="2.4" d="M937.8 300.6h0"/>
<path stroke="#f28e2b" stroke-opacity="0.85" stroke-width="2.2" d="M646.8 127.1h0M670.2 142.5h0M667.7 161.8h0M675.4 166h0M524.5 368.2h0M649.7 134.3h0M694.8 163.7h0M392.1 196.5h0M666 147.4h0M671.7 140.5h0M695.4 153.4h0M389.3 218.6h0M371.5 211.6h0M440.3 164.8h0M664.4 162.7h0M646.8 137.6h0M467 404.5h0M420.4 208.6h0M642.9 140.1h0M392.1 218.9h0M678.1 144.6h0M682.2 155.4h0M644.9 124.6h0M643 129.8h0M667.5 169.2h0M673.9 145.7h0M642.6 128h0M446.6 187.7h0M299.6 193.5h0M632.5 124.5h0M416.8 188.6h0M632.4 195.8h0M643.2 112.7h0M647.8 136.7h0M672.7 147.2h0M691.4 161.9h0M317.8 202.8h0M647.7 167.6h0M377.5 210.2h0M429.9 177h0M661.5 139.6h0M398.1 184.6h0M652.8 139.4h0M408.2 208.1h0M421.4 201.4h0M666.4 161.2h0M644.6 135.9h0M669.5 138.7h0M686.1 181.6h0M350.9 186.1h0M623.3 191.5h0M648.7 140.2h0M300.8 192.7h0M626.6 215.6h0M682.1 168.9h0M671.1 153.6h0M661.7 152.8h0M513.3 355.9h0M665.4 148.5h0M650.2 136.1h0M534.9 369.4h0M440.3 181.1h0M666.7 162h0M343.6 202.5h0M656 143.1h0M316.4 213.8h0M631.3 130.7h0M669.1 141.7h0M670 159.1h0M665.5 136.7h0M675.2 165.3h0M630.8 130.4h0M637.2 118.2h0M680.3 153.3h0M435.8 186.4h0M647.8 140.5h0M477.2 409.5h0M631.6 130.5h0M650.9 137.7h0M303.6 165.4h0M670.3 150.7h0M654.4 134.3h0M333.9 188.6h0M676.8 135h0M650.7 140.5h0M435.6 181h0M641.6 116.1h0M650.2 140.8h0M681 172.2h0M672.4 166.2h0M405.2 215h0M656.9 187.8h0M432.9 197.3h0M703.7 156.9h0M675.2 189.2h0M657.7 153.5h0M676.5 133.4h0M315.9 209h0M642.2 129.4h0M695.9 153.7h0M425.7 201.5h0M643.4 128.9h0M385.4 166.2h0M651 139.8h0M675.7 150.5h0M663.1 135.4h0M684.5 164h0M402.7 181.4h0M418.9 203.3h0M676.1 133.6h0M690.6 201h0M671.2 159h0M375.2 147h0M661.7 142.1h0M644.6 111.1h0M416.2 228h0M424.9 318.7h0M662 135.6h0M649.4 138.1h0M738 221.4h0M403.8 185.9h0M677.3 155.4h0M658.2 154h0M370.4 189h0M674.8 143.2h0M647.7 133.5h0M367.7 254.2h0M673.9 149.9h0M354.9 161.8h0M645.8 158.5h0M642 133.9h0M644.2 137.9h0M748.2 214.1h0M681.2 152.5h0M674.4 161.1h0M382.6 180.6h0M683.5 108.9h0M671.5 137.5h0M395.7 218.2h0M690.3 182.2h0M674.6 156.3h0M646.8 168h0M683.2 154.7h0M644.5 142.7h0M645.9 137.9h0M690.4 145.5h0M639.4 181.9h0M721.2 124.1h0M434.1 187.1h0M680.9 155.2h0M653.6 136.8h0M674.8 150.2h0M430.5 196.1h0M646.9 137.8h0M709 135.3h0M398.6 217.1h0M637.8 143.6h0M682.3 154.2h0M422.6 172.3h0M419.9 203.3h0M684.2 180h0M751.5 214.6h0M675.2 152h0M398.5 173.6h0M430.6 183.1h0M655.2 137.6h0M684.6 170.1h0M668 152h0M652 141.2h0M394.8 177.5h0M418.3 235.6h0M644.3 139.8h0M320.5 202h0M356.9 155.7h0M659.7 171.3h0M401.6 205.6h0M686.4 178.4h0M672.2 150.9h0M632.4 132.3h0M676.2 161.1h0M512.1 339.6h0M683.3 137h0M656.9 151.2h0M305.6 178.6h0M642.2 134.5h0M670.2 144.1h0M316.8 213.5h0M687.8 141.7h0M670.3 142.7h0M671.2 153.5h0M668.9 140.3h0M447.8 177.5h0M640.2 118.6h0M418.5 202.3h0M422.4 233.3h0M687.5 133.4h0M639.2 139.6h0M646.6 159.5h0M662.5 135.8h0M707.6 134.9h0M381.3 173.8h0M639.8 117.8h0M663.7 173.2h0M407.5 176.2h0M642.3 137.6h0M649.8 135.9h0M684.6 165.2h0M416.4 185h0M402.2 174.9h0M436.4 163.8h0M648.3 134.9h0M672.2 156h0M423.5 189.8h0M642.2 139.7h0M385 185.6h0M782.1 238h0M648.2 139.7h0M664.9 161.6h0M685.7 119.4h0M300.9 195.6h0M539.9 321.1h0M673.7 146.4h0M646 131.7h0M636.8 144.5h0M662.1 137h0M393.6 191.2h0M644.2 130.8h0M661.2 142.6h0M670.8 159.4h0M683.8 140.1h0M705.6 181.3h0M678.7 149.7h0M683.1 161.1h0M349.4 188.9h0M652 133.9h0M347 214.8h0M709.1 135.4h0M673.5 158h0M421.9 206.7h0M661.4 146.4h0M377.3 222.5h0M304 194.9h0M646.3 131.8h0M663.3 136h0M316.9 211.9h0M372.8 202.9h0M391.9 190.4h0M668.9 158.4h0M670.9 156.1h0M426.4 311h0M400.9 217.3h0M646.8 138.3h0M509.4 385.2h0M308.8 188.4h0M650.3 140.3h0M653.2 144.4h0M663.2 144.1h0M655.9 182.7h0M333.4 183.4h0M683.5 108.9h0M655.4 170.6h0M644.3 141.9h0M673.9 152.5h0M673.5 158.7h0M665.5 163.4h0M640.8 160.3h0M673 157.2h0M638 119.7h0M689.7 183.2h0M648.4 138.6h0M644.4 140.2h0M208.7 253.3h0M645.6 138.6h0M674.3 157.2h0M685.4 119.1h0M669.9 152.9h0M669.4 160.1h0M644.9 135.3h0M702.2 412.6h0M680.7 153.2h0M438.9 297.1h0M671 138.2h0M677 135h0M403.1 209.3h0M642 139.4h0M663 135.3h0M669 142.2h0M372 212.3h0M394 192.4h0M694.8 155.2h0M638.7 144.4h0M646.4 138.9h0M644 136.1h0M678.1 130.9h0M646.9 138.5h0M663.1 163.9h0M679 128.6h0M625.5 173.4h0M681.5 169.2h0M646.2 137.5h0M657.7 142.3h0M400 177.4h0M659 142.7h0M503.8 400h0M645.8 138.7h0M625.8 136.7h0M430.7 189.9h0M441.3 183.3h0M648.8 133.7h0M663.7 135.9h0M300 164h0M393.1 269.1h0M676.8 144.7h0M652.9 150.6h0M624.9 182h0M428.5 172.6h0M413.7 186.8h0M649.2 168.9h0M677 150.8h0M405.8 192.6h0M654.1 139.7h0M422.4 210.2h0M641.6 142.9h0M423.2 147.9h0M688.4 141.2h0M646.6 138.7h0M637.2 140.3h0M689.5 146.9h0M729.1 387.6h0M643.4 135.2h0M383.2 170h0M648.5 140.3h0M439.6 175.2h0M301.1 179.1h0M632.6 130.4h0M687.6 141.1h0M660.3 144.5h0M684.4 178.3h0M661.7 137.4h0M661.9 136.8h0M623.4 190.9h0M432.8 188.6h0M315.7 207.4h0M651.4 138.5h0M696.1 153.6h0M645 131.9h0M658.2 182h0M397.1 176.5h0M683.1 154.4h0M421.9 228.4h0M750.2 208h0M431.5 203.1h0M685.4 117.3h0M335.5 212.4h0M658.5 146.3h0M716.8 193.6h0M348.3 187.2h0M644.4 164.1h0M756.3 118.8h0M677.9 129.6h0M681.5 172.3h0M679.9 156.9h0M674.8 164.7h0M419.3 224.9h0M672.7 156.7h0M348.6 205.3h0M656.5 151.4h0M686.2 179.5h0M670.5 159h0M792 233h0M688.2 183.6h0M414.5 184.8h0M687.8 132.7h0M691.2 146.7h0M642.4 130.3h0M435.9 187h0M368.6 175.1h0M653 141.2h0M635.4 116.4h0M523.5 317.6h0M423.2 234.9h0M674.1 157.3h0M676.4 139.1h0M687.3 134.6h0M641 173.9h0M729.5 386.2h0M368.2 208.6h0M331.5 184.4h0M670.6 167.7h0M672.6 157.2h0M650.5 141.1h0M675 166.8h0M680.3 132.2h0M413.9 174h0M680.6 148h0M301.9 191.6h0M392.2 268.5h0M540 347.6h0M744.3 203.6h0M642 135.9h0M715.6 176h0M670.9 138.8h0M641.2 117.8h0M360.6 163.3h0M638.9 184.5h0M437.8 185.5h0M384.3 167.4h0M645.5 138.6h0M296.5 200.5h0M371 218.9h0M645.3 128.2h0M380.8 189.8h0M641.5 128.2h0M655.6 151.7h0M419.8 235.4h0M673.4 171h0M749.4 215.1h0M674.3 150.3h0M648.4 139h0M346.1 165.4h0M439.1 182.9h0M671.5 151.7h0M400.2 179.1h0M690.6 162.7h0M450.8 257h0M419.4 206.9h0M434.7 292.7h0M645.7 141.7h0M701.7 413h0M681.3 136.6h0M409.9 187.6h0M643.5 130.4h0M524.6 376.1h0M398 209.1h0M379.3 175.6h0M663.5 135.1h0M446.9 173.5h0M421.8 232.7h0M378.3 221.8h0M302.3 191.3h0M630.2 132.1h0M675.8 141.7h0M670.1 172.2h0M408.1 209.3h0M675.9 165.7h0M652.8 142.3h0M415.3 182.5h0M413.4 177.5h0M690.9 157.1h0M550.3 330.7h0M681.4 168.4h0M440.3 165.5h0M419.6 203.6h0M636.8 198.1h0M675.6 145.7h0M685.1 119.2h0M635.3 115.6h0M681.9 169.7h0M376.2 212.5h0M391.1 191.5h0M737.2 220.7h0M689.7 145.4h0M736.1 143.9h0M382.5 161.8h0M637.7 183.6h0M675.5 158h0M678.1 129.4h0M374.1 187.4h0M646.2 137.3h0M648.3 188.2h0M723.5 169.3h0M640.3 140.9h0M349.9 189.1h0M677.9 129.2h0M317.2 209.9h0M396.1 175.8h0M639.6 121.2h0M302.2 195.5h0M641.7 129.9h0M646.3 134h0M667.6 139.1h0M345.1 213.4h0M376.3 213.3h0M701.6 171.5h0M656 151.7h0M717.8 112.6h0M673.6 146.6h0M423.9 172.3h0M423.2 205h0M660.1 149.6h0M425.3 183.6h0M641.5 129.2h0M400 175.4h0M301.6 195.7h0M665.5 160.8h0M680.8 154.1h0M320.2 138.6h0M382.4 168.3h0M682.4 146.6h0M727.7 127.9h0M423.7 167.9h0M686.3 135.1h0M682.1 135.9h0M393.5 203.7h0M440.4 181.2h0M644.9 134.5h0M657.1 151.7h0M652.5 175.1h0M418.1 183.1h0M305.9 191.1h0M648.3 127.8h0M684.1 108.5h0M671.1 152.4h0M648 137.3h0M313.6 207.3h0M649.9 139.3h0M422.1 184.4h0M321.8 205h0M504.2 398.9h0M300.9 158.7h0M731.7 182.5h0M370.8 182.6h0M298.7 196.5h0M511.4 392.1h0M738.1 220.9h0M384.9 199.1h0M374.9 180h0M379.8 183.2h0M304.7 196.7h0M645.3 121.7h0M422.4 316.7h0M673.3 145.2h0M646.4 131.3h0M684.9 193.9h0M669.4 157.8h0M405.3 206.9h0M673.1 152.8h0M654.6 139.5h0M648.9 170.9h0M657.8 181.8h0M645 128.4h0M408.5 208.5h0M650.4 140.1h0M645.6 137.3h0M425.6 172.3h0"/>
<path stroke="#6e7378" stroke-opacity="0.88" stroke-width="2.2" d="M941.3 236.9h0M974.4 219.8h0M1079 412.8h0M872 260.1h0M1078.9 410.9h0M987.2 214.1h0M992.7 217h0M868.5 285.4h0M947.6 277.7h0M1042.5 416.3h0M840.5 237.5h0M1001.5 281.5h0M1079.1 412.4h0M978.9 187.4h0M954.6 330.6h0M869.6 273.3h0M984.4 238.9h0M990.1 220.3h0M867.9 226.3h0M867.2 281.5h0M938.9 301.3h0M995.3 269h0M857.1 208.4h0M971.9 245.8h0M840 236.4h0M993.5 217.7h0M991.8 219.4h0M1080.6 410.1h0M867.3 280.4h0M892 228.4h0M949.8 249.6h0M973.9 219.1h0M1032.8 204.6h0M1084.1 391.6h0M954.4 326.2h0M877.5 273.1h0M951.8 222.8h0M938.2 301.6h0"/>
<path stroke="#76b7b2" stroke-opacity="0.85" stroke-width="2.2" d="M367.2 253.6h0M329.4 130h0M397.6 175.9h0M440.3 176.4h0M352.6 194.9h0M315.7 207.5h0M431.7 188.6h0M436.6 164.9h0M372 206.6h0M304 191.4h0M432.1 197.8h0M438.2 191.6h0M439.2 184.6h0M403.6 221.9h0M423.3 236.1h0M444.8 182.6h0M346.4 204.7h0M368.5 184.6h0M431.1 204.9h0M669.9 160.1h0M380.5 189.7h0M356.8 199.3h0M401.8 198.9h0M418.2 200h0M201.4 248.5h0M430.7 194.5h0M409.3 189.6h0M373.3 203.4h0M356.9 199.3h0M396 171.6h0M324.2 179.4h0M395.9 271.1h0M375.3 211.5h0M426.1 203.2h0M623.1 191.7h0M431.2 258.4h0M317.3 209.3h0M402.6 248.9h0M517.5 380.1h0M425.5 201.7h0M489.8 416.4h0M316.3 165h0M431.1 197.7h0M448.5 254.1h0M418.8 186.1h0M443.4 181.6h0M442.6 182.6h0M440.4 165.1h0M378 175.5h0M415.2 225.9h0M412.6 208h0M431.2 190.5h0M393.5 204h0M425.5 207.6h0M515.5 377.3h0M440.6 184.7h0M411.9 188.1h0M373.8 216.5h0M444.1 177.7h0M404.2 182.5h0M434.2 189.5h0M386 205h0M419.1 169.2h0M425.1 212.3h0M303.1 164.6h0M439.7 182h0M326.7 142.7h0M402 187.5h0M443.9 256.8h0M369.4 222.9h0M432.3 179.3h0M439.1 185h0M320.7 159.2h0M404.2 181.1h0M371.5 221.1h0M418.5 226.8h0M387.6 205.3h0M372.6 202.7h0M426.3 133.8h0M324.8 169.4h0M393.9 208.9h0M432 189.5h0M680.8 148.3h0M200.5 248.2h0M438.8 180.4h0M315.8 208.2h0M346.5 182h0M315.3 211.2h0M320.9 173.7h0M369.5 182.5h0M437 180.2h0M432.5 188.5h0M439.9 182.3h0M414.1 204.8h0M440.4 183.9h0M319.1 154h0M414.2 227.7h0M372.5 202.5h0M474.6 280h0M404.3 186.6h0M412.8 208.9h0M372.8 209.9h0M396.6 201.7h0M302.7 197.7h0M447.2 176.1h0M423.5 284.8h0M395 173.8h0M433.5 193.5h0M376.4 181.4h0M360.4 209h0M391.4 175.9h0M424.4 175.2h0M305.9 191.2h0M422 234.1h0M413.2 207h0M465.8 257.2h0M421.5 232.7h0M419.7 233.1h0M419.6 208.4h0M379.5 185h0M432 184h0M406 190.2h0M680.3 149.3h0M385 214.6h0M307.2 186.6h0M350.6 187.4h0M347.9 225.6h0M440.9 182.9h0M393.9 191.3h0M405.4 191.8h0M313.4 207.5h0M303.5 165.5h0M431.8 189.8h0M645 157.9h0M436 185.4h0M443.5 182.5h0M394.8 249.4h0M449.3 179.3h0M407 207.2h0M388.3 220.7h0M382.5 218.3h0M322.5 200.3h0M385.7 220.6h0M443.9 177.7h0M354.2 193.4h0M406.7 190.2h0M417.3 180.6h0M376.9 184.1h0M395.9 182.2h0M443.3 178.2h0M409.2 214.8h0M318.6 199.8h0M402.6 200h0M200.8 248.8h0M673.4 157.3h0M418.7 175.1h0M425.2 175.7h0M403.3 209.3h0M306.2 172.8h0M413 177.1h0M415.3 243h0M379.3 223.8h0M420.3 209.3h0M413.1 141.9h0M439.1 183.5h0M437.2 185.9h0M301.9 194.4h0M665.3 148.3h0M311.7 206.3h0M430.7 190.2h0M409.4 221.6h0M314.6 208.2h0M400.7 181.2h0M439.7 182.9h0M434.3 165.5h0M379.8 190.5h0M403 185h0M433.5 196.9h0M427.7 190.4h0M656.3 174.6h0M300.4 164.4h0M362.4 246h0M440 163.8h0M444.8 178.9h0M414.2 177.8h0M408.1 190.5h0M414.3 211.5h0M304.1 195.2h0M670 156h0M434.4 181.6h0M383.3 188.6h0M307.4 195h0M509.4 358.6h0M413.3 176.4h0M395 221.5h0M342.5 146.5h0M299.3 193.9h0M549.4 327h0M355.7 250.4h0M417.3 182.7h0M441.3 183.6h0M421 184.8h0M322.1 174.3h0M648.4 141.4h0M382.7 179.7h0M442 174.2h0M403 209h0M421.2 232.2h0M430.5 190.3h0M313.8 214.7h0M379 221.9h0M325.1 131.7h0M425.3 169.6h0M465.5 281.3h0M376.8 221.7h0M301.6 164.1h0M437.9 177.3h0M301.3 154.7h0M420.6 204.2h0M404.3 203.4h0M304.9 198.6h0M364.3 234.9h0M420.7 225.1h0M426.4 203.8h0M415.9 227.2h0M380.6 189.6h0M413.4 177h0M415.1 227.7h0M367.1 221.2h0M392 204.8h0M424.4 201.4h0M417.2 220h0M314.2 180.9h0M386.2 167.6h0M413.9 217h0M436.1 181.9h0M334.1 172.6h0M444.6 177h0M411.4 186.8h0M409.4 209.7h0M370.4 223.5h0M393.9 191.3h0M331.1 177.3h0M380.7 189.2h0M412.2 208.5h0M411.8 176.9h0M199.2 250.2h0M439.4 177.1h0M444.4 178h0M379.2 195.8h0M309 187.6h0M378.1 207h0M322.3 140.1h0M419.2 203.7h0M324.1 210.2h0M421.4 181.7h0M301.8 165.2h0M438.8 128.9h0M306.5 191.5h0M399.3 211.4h0M196.5 246.3h0M406.4 213.7h0M640.8 134h0M400.1 179.8h0M298.1 195.2h0M393.5 221.2h0M376.3 254.8h0M415.7 201.2h0M379.2 198.4h0M313.1 207.9h0M397 191.6h0M303.9 167.3h0M421.5 186.6h0M445 178.6h0M666 146h0M420.4 226.2h0M415.2 186h0M305.5 199.9h0M439.3 183.6h0M334.2 213.8h0M375.3 183.6h0M299.5 164.6h0M404.8 187h0M357.9 204.3h0M448.4 179.4h0M369 223.9h0M411.2 186.6h0M409.9 281.6h0M312.9 208.1h0M430.5 190.4h0M392.5 223.1h0M434.3 165.3h0M401.6 200.1h0M431.9 187.8h0M404.3 275.7h0M421.7 232.1h0M331.5 183.9h0M760.7 247.9h0M446.3 178.5h0M459.3 280.5h0M425.5 171.8h0M412.1 208.1h0M418.5 216.9h0M429.8 190.9h0M362.7 135.6h0M428.2 194.4h0M660.6 148.8h0M411.5 177.5h0M413.2 220.6h0M374.8 221.7h0M703.8 154.8h0M311.4 207.2h0"/>
<path stroke="#4e79a7" stroke-opacity="0.85" stroke-width="2.2" d="M424.9 174.6h0M417 129.4h0M648.6 133.9h0M636.7 119.7h0M336 239.9h0M644.9 133.5h0M645.5 135.5h0M421.6 232.6h0M313 210.9h0M385.4 221.5h0M413.6 208h0M423.2 193.6h0M683.4 166.9h0M385.6 167.5h0M640 185.5h0M313.8 211.5h0M323.7 136.9h0M651.3 138.8h0M372 206.1h0M429.6 236.9h0M679.2 131.8h0M397.4 176.2h0M673.4 150.1h0M470.6 169h0M400.3 174.5h0M421.8 231.3h0M439 189.1h0M647.8 167.9h0M421.3 171.7h0M550.3 333.4h0M307.8 171.8h0M429.4 174h0M413.2 208.7h0M516.9 379.3h0M689.6 135.8h0M662 141.7h0M414.4 230.1h0M650.7 143.6h0M385.5 207h0M649.7 135.5h0M318 171.4h0M374 221.2h0M380.1 222.2h0M405.3 193.5h0M428.4 193h0M374.4 206h0M631.6 124.6h0M400.3 193.1h0M419.3 227.4h0M383.4 213.1h0M674.8 150h0M673.9 145.3h0M200.9 248.5h0M305.9 191h0M438.9 186.3h0M658.7 143.8h0M681.8 140.2h0M806.4 236.4h0M313.9 207.2h0M645.2 142.1h0M649.1 138.9h0M372.1 179.2h0M654.9 162.7h0M303.6 196.1h0M411.5 208.8h0M379.6 189.6h0M643.3 128.1h0M316.6 212.1h0M400.6 179.2h0M647.5 137.7h0M411 189.6h0M347.8 190.9h0M685.7 164.4h0M399.9 175.7h0M436.7 188.5h0M384.5 209.1h0M314.7 208.7h0M624.8 137.5h0M668.8 140.7h0M664.2 174.2h0M647.4 137.9h0M301.1 195.3h0M311.7 168.1h0M412.8 185.7h0M415.6 221.6h0M434.4 176.9h0M369.3 186.6h0M684.5 133.7h0M405.8 193.9h0M672.6 156.8h0M436.5 185.2h0M351.1 187.2h0M669.3 157.1h0M426.1 200.9h0M298.4 149.5h0M663 154.1h0M656.4 151.8h0M645 140.5h0M329.5 195h0M682.5 145h0M424.3 170.6h0M663.3 164.2h0M669.5 158.1h0M652.8 138.6h0M317.6 210.8h0M640.8 160.7h0M204.7 249.7h0M296.1 193.7h0M667.9 140.6h0M414.5 223.4h0M365 235.5h0M410 211h0M414.4 207h0M430.6 190.8h0M383.9 178.5h0M389.3 220.4h0M421.7 210.8h0M643 153.1h0M322.7 200.6h0M346.1 203.8h0M407.7 193.1h0M654.1 150.4h0M310.1 199h0M674.6 164.5h0M422.8 204h0M430.3 174h0M422.9 212.3h0M406 175.5h0M334 214.8h0M431.6 190.3h0M409.2 208h0M316.4 207.8h0M660.6 143.1h0M643.3 128.8h0M672.4 166.5h0M641.1 139.3h0M427.8 201.1h0M656.2 149.2h0M382.5 220.7h0M376.5 187.6h0M681.1 171.7h0M683.8 155.1h0M662.6 140.8h0M433.9 171h0M384.4 167.1h0M662.3 163h0M379.4 210.2h0M309.5 198h0M431.5 212h0M405.1 175.1h0M368 216.8h0M650.2 135.2h0M358 140.2h0M670.9 143h0M664.6 135.4h0M322.2 136.5h0M646.1 131h0M428.8 192h0M400.4 179.2h0M297.3 149.4h0M331 183.6h0M358.5 211.2h0M655.4 174.8h0M643.4 111.2h0M400.5 178.9h0M417.3 180.6h0M322.9 199.7h0M318.2 206.8h0M432.4 197.5h0M684.1 180.4h0M436.8 186.5h0M668 143.2h0M663.6 135.2h0M663.4 135.2h0M298.9 195.6h0M326.6 128.9h0M431.3 189.1h0M418.9 176.4h0M356.5 196.1h0M402.9 173.5h0M665.7 164.7h0M668.6 141.6h0M421.9 185h0M666.2 140.8h0M439.8 165.7h0M301.7 196.8h0M314.3 206.8h0M430.6 168.5h0M382.8 168.9h0M625.5 137.6h0"/>
<path stroke="#6e7378" stroke-opacity="0.85" stroke-width="2.2" d="M368 222.5h0M413.9 188.6h0M413.4 177.3h0M206.4 253.6h0M673.6 162.6h0M299.7 150.5h0M671.8 159h0M651.2 134.2h0M416.2 181.5h0M431.7 188.7h0M644.7 142.5h0M445.7 181h0M312.4 210h0M385.9 181.1h0M416.5 225.1h0M396.1 171.2h0M323.7 153.1h0M417.6 225.8h0M683.6 163.9h0M642.9 129.9h0M444.3 177h0M646.2 138.5h0M448.6 174.8h0M432.9 187.4h0M641 139.5h0M350.3 139.9h0M429.7 190.5h0M351.2 187.3h0M203 250.1h0M363.8 211.2h0M369.3 222.1h0M748.4 213.9h0M516.1 378.6h0M669.9 171.7h0M299.3 163.6h0M410.4 282.1h0M795.7 236.1h0M346.8 189.1h0M312.5 207.3h0M312 189.3h0M432.3 184.6h0M449.3 177.4h0M643.7 124.8h0M805.9 236.1h0M442.4 173.4h0M660.4 153.6h0M669.8 138.5h0M315.6 205h0M380.8 167.2h0M632.4 124.7h0M678.5 152.6h0M420.4 178.3h0M393 220.8h0M450.4 174.7h0M655.5 152.4h0M444.5 174.4h0M421.5 234.4h0M642.8 136h0M683.3 167.1h0M663.1 173h0M429.1 176.4h0M526.7 377.3h0M483.5 415.3h0M654.1 181.8h0M658.4 144.3h0M710.3 178.7h0M424.7 172.5h0M738.3 220.7h0M447.8 158.3h0M314.2 208.3h0M298.5 147.6h0M461.6 257h0M675.4 164.6h0M379 219.9h0M432.4 196.8h0M698 153.9h0M431.5 198.4h0M663.2 135.1h0M662.5 141.1h0M423.2 285.1h0M379.6 180.3h0M415.2 227.4h0M326.1 131.4h0M669.9 172.3h0M448.6 411.4h0M395.6 214.6h0M377.4 140.7h0M380.7 222.6h0M702.4 156.6h0M641.7 122.7h0M687.8 130h0M429.7 174.6h0M435.9 200.4h0M419.8 204.1h0M314.5 207.6h0M397.9 200h0M403 200.7h0M414 187.8h0M407.8 209.7h0M414.8 229.9h0M417.4 232.8h0M377.4 209.6h0M400.2 179.1h0M650.3 137.8h0M316.9 211.2h0M431.3 189.8h0M368.4 254.8h0M404.9 186.6h0M661.8 137.4h0M325.8 141.4h0M707.5 167.7h0M401.6 270h0M430.5 344.9h0M438.4 184.8h0M432.6 191h0M346.6 214h0M392.8 203.4h0M418.2 225.8h0M434.3 165.1h0M673.4 146.3h0M668.6 140.8h0M645.5 162.1h0M436 186.4h0M405.7 194.6h0M627.8 209.1h0M690.2 159h0M668.9 138.8h0M748.7 211.7h0M328.6 183h0M643.4 128.2h0M793 233.3h0M674.9 151.2h0M443.6 178h0M446.2 357.7h0M416.5 183.4h0M373.3 221.9h0M413 187.2h0M660.3 164.1h0M393.3 196h0M370.7 202.4h0M442.4 180.1h0M674.9 145.3h0M374.6 211h0M643.4 140.3h0"/>
<path stroke="#4e79a7" stroke-opacity="0.88" stroke-width="2.2" d="M1074.7 418.8h0M870.3 227h0M878.1 273.1h0M859.7 256.8h0M922.1 262.6h0M988.3 232.8h0M1078 410.2h0M976.5 334.7h0M991.6 244.4h0M857.9 256.5h0M994.3 190.2h0M937 299.1h0M900.3 244.6h0M871.4 260.2h0M865 231h0M875 272.1h0M854 253.9h0M962.4 252.1h0M992.5 216.7h0M868.6 219.2h0M1010.7 193.8h0M971.1 244.9h0M995.9 239.2h0M953 328.1h0M978.6 406.2h0M951.9 329.5h0M973.7 245.4h0M853.8 254.4h0M935.9 295.6h0M868.5 285.8h0M869.8 273.3h0M931.2 256.6h0M970.2 331.3h0M971.4 246.8h0M860.5 216h0M979.1 293.4h0M962 304.8h0M869.8 273.3h0M979 186.2h0M993.3 216h0M972 242.1h0M1019.8 209.1h0M856 256.3h0M905.1 242.1h0M1043.7 416.7h0M946.4 277.2h0M1020.6 208.4h0M993.6 268.4h0M976.1 244.8h0M900.6 244.5h0M970.3 227.7h0M952.3 279.4h0M869.4 226.7h0M1084.1 392.1h0M869.7 224.6h0M954.5 330.8h0M958.5 207.2h0M974.3 244.6h0M951.7 279h0M1034.3 205.6h0M934.9 271h0M979 406.3h0M867.4 226.7h0M857.4 255.4h0M1081.3 415.4h0M871.9 260.1h0M901 243.4h0M1038.5 203.7h0M994.1 269.3h0M1085.3 393.1h0M955 328.3h0M950.8 329.3h0M945.5 219.4h0M932.7 271.5h0M944.1 219.7h0M855.6 242.9h0M906.2 240.8h0M859.9 255.6h0M986.9 214.2h0M980.1 186h0M1008.8 162.8h0M1072.7 417.4h0M1000 178.5h0M994.5 237.5h0M872.3 281.9h0M996.3 217.7h0M870.4 274.6h0M859.2 257h0M1080.7 414.3h0"/>
<path stroke="#76b7b2" stroke-opacity="0.88" stroke-width="2.2" d="M1084.1 391.6h0M868.7 226h0M984.4 238.2h0M991.2 217.4h0M876.2 290.9h0M873.4 273.6h0M1010 195.2h0M992.9 217.4h0"/>
<path stroke="#76b7b2" stroke-opacity="0.8" stroke-width="2" d="M1028.3 206.3h0M1046.8 194.8h0"/>
</g>
<g font-family="Liberation Sans, sans-serif" font-size="12.5" fill="#777" text-anchor="middle" stroke="#f4f4f4" stroke-opacity="0.75" stroke-width="2" paint-order="stroke" stroke-linejoin="round">
<text x="333.0" y="104.4" textLength="42.0" lengthAdjust="spacingAndGlyphs">Canada</text>
<text x="368.0" y="190.7" textLength="76.0" lengthAdjust="spacingAndGlyphs">United States</text>
<text x="510.0" y="348.5" textLength="31.5" lengthAdjust="spacingAndGlyphs">Brazil</text>
<text x="932.3" y="208.0" textLength="30.5" lengthAdjust="spacingAndGlyphs">China</text>
<text x="872.0" y="249.0" textLength="28.0" lengthAdjust="spacingAndGlyphs">India</text>
<text x="1029.3" y="387.3" textLength="51.0" lengthAdjust="spacingAndGlyphs">Australia</text>
</g><!--ME-->
</svg>
<div class="abs" style="left:41px;top:216px;font-size:11.5px;color:#333;-webkit-text-stroke:0.25px #333;letter-spacing:0.5px">Gateway</div>
<div class="abs" style="left:43px;top:233px;width:14px;height:14px;background:#4e79a7"></div>
<div class="abs" style="left:43px;top:253px;width:14px;height:14px;background:#f28e2b"></div>
<div class="abs" style="left:43px;top:273px;width:14px;height:14px;background:#76b7b2"></div>
<div class="abs" style="left:62px;top:235px;font-size:12px;color:#444">APAC</div>
<div class="abs" style="left:62px;top:255px;font-size:12px;color:#444">EMEA</div>
<div class="abs" style="left:62px;top:275px;font-size:12px;color:#444">NA</div>
<div class="abs" id="sb" style="left:213px;top:230px;width:16px;height:57px;background:#f1f1f1">
<div class="abs" style="left:4.5px;top:7px;width:0;height:0;border-left:3.5px solid transparent;border-right:3.5px solid transparent;border-bottom:4px solid #333"></div>
<div class="abs" style="left:0.5px;top:19px;width:15px;height:18px;border:1px solid #8e8e8e;border-radius:2.5px;background:linear-gradient(#fff,#e4e4e4)">
<div class="abs" style="left:3px;top:5px;width:7px;height:1px;background:#555"></div><div class="abs" style="left:3px;top:8px;width:7px;height:1px;background:#555"></div><div class="abs" style="left:3px;top:11px;width:7px;height:1px;background:#555"></div></div>
<div class="abs" style="left:4.5px;top:47px;width:0;height:0;border-left:3.5px solid transparent;border-right:3.5px solid transparent;border-top:4px solid #333"></div>
</div>
<div class="abs" style="left:5px;top:307px;font-size:11.1px;color:#666">© OpenStreetMap contributors</div>
</div>
<div class="abs" id="t3">Improper Routing</div>
<div class="abs" id="t3s">Click on a region to see the impact</div>
<div class="abs dd" style="left:462px;top:437px;width:215px;height:20px"><span class="tx">Show All</span><span class="dv"></span><span class="ar"></span></div>
<svg class="abs" style="left:0;top:485px" width="720" height="282" viewBox="0 485 720 282" shape-rendering="crispEdges">
<g stroke="#ebebeb" stroke-width="1" fill="none">
<path d="M175.5 494V716M245.5 494V716M315.5 494V716M385.5 494V716M446.5 494V716M503.5 494V716M561.5 494V716M618.5 494V716"/>
</g>
<g stroke="#e0e0e0" stroke-width="1" fill="none">
<path d="M105.5 494.5H673.5V716.5H105.5ZM389.5 494V716"/>
<path d="M105.5 716V721M175.5 716V721M245.5 716V721M315.5 716V721M385.5 716V721M389.5 716V721M446.5 716V721M503.5 716V721M561.5 716V721M618.5 716V721"/>
</g>
<g>
<rect x="106" y="536" width="11" height="28" fill="#76b7b2"/><rect x="117" y="536" width="6" height="28" fill="#f28e2b"/><rect x="123" y="536" width="14" height="28" fill="#4e79a7"/>
<rect x="106" y="573" width="19" height="28" fill="#76b7b2"/><rect x="125" y="573" width="22" height="28" fill="#f28e2b"/><rect x="147" y="573" width="11" height="28" fill="#4e79a7"/>
<rect x="106" y="610" width="227" height="28" fill="#76b7b2"/><rect x="333" y="610" width="27" height="28" fill="#f28e2b"/><rect x="360" y="610" width="15" height="28" fill="#4e79a7"/>
<rect x="106" y="647" width="5" height="28" fill="#76b7b2"/><rect x="111" y="647" width="2" height="28" fill="#4e79a7"/>
<rect x="106" y="684" width="1" height="28" fill="#76b7b2"/><rect x="107" y="684" width="1" height="28" fill="#f28e2b"/><rect x="108" y="684" width="1" height="28" fill="#8a8f94"/>
</g>
<g fill="#999999" stroke="#b5b5b5" stroke-width="1">
<rect x="390.5" y="499.5" width="70" height="27"/>
<rect x="390.5" y="536.5" width="158" height="27"/>
<rect x="390.5" y="573.5" width="169" height="27"/>
<rect x="390.5" y="610.5" width="43" height="27"/>
<rect x="390.5" y="647.5" width="219" height="27"/>
<rect x="390.5" y="684.5" width="60" height="27"/>
</g>
</svg>
<div class="abs rl" style="top:507px">Africa</div>
<div class="abs rl" style="top:544px">Asia</div>
<div class="abs rl" style="top:581px">Europe</div>
<div class="abs rl" style="top:618px">North America</div>
<div class="abs rl" style="top:655px">Oceania</div>
<div class="abs rl" style="top:692px">South America</div>
<div class="abs bl" style="left:195px;top:617.5px;transform:scaleX(1.07)">651,964</div>
<div class="abs bl" style="left:465px;top:506px">25.21%</div>
<div class="abs bl" style="left:553px;top:544px">56.03%</div>
<div class="abs bl" style="left:564px;top:581px">59.83%</div>
<div class="abs bl" style="left:438px;top:617px">15.61%</div>
<div class="abs bl" style="left:614px;top:655px">77.20%</div>
<div class="abs bl" style="left:455px;top:692px">21.51%</div>
<div class="abs al" style="left:107px;top:726.2px">0K</div>
<div class="abs al" style="left:160px;top:726.2px">200K</div>
<div class="abs al" style="left:230px;top:726.2px">400K</div>
<div class="abs al" style="left:300px;top:726.2px">600K</div>
<div class="abs al" style="left:359px;top:726.2px">800K</div>
<div class="abs al" style="left:425px;top:726.2px">20.00%</div>
<div class="abs al" style="left:482px;top:726.2px">40.00%</div>
<div class="abs al" style="left:539px;top:726.2px">60.00%</div>
<div class="abs al" style="left:596px;top:726.2px">80.00%</div>
<div class="abs at" style="left:181px;top:742px">Number of Connections</div>
<div class="abs at" style="left:489.5px;top:742px;transform:scaleX(1.085)">% Misdirection</div>
<div class="abs" id="t4">Gateway Usage</div>
<svg class="abs" style="left:725px;top:470px" width="635" height="297" viewBox="725 470 635 297">
<g shape-rendering="crispEdges" stroke="#ebebeb" stroke-width="1" fill="none">
<path d="M790 481.5H1360M790 540.5H1360M790 598.5H1360M790 657.5H1360"/>
<path d="M789.5 478V729M789.5 728.5H1360" stroke="#e8e8e8"/>
<path d="M784 481.5H790M784 540.5H790M784 598.5H790M784 657.5H790M784 716.5H790" stroke="#efefef"/>
<path d="M853.5 729V731M1072.5 729V731M1290.5 729V731" stroke="#ededed"/>
<path d="M790 716.5H1360" stroke="#b3b3b3" stroke-dasharray="2 1"/>
</g>
<!--LS--><g fill="none" stroke-width="2.85" stroke-linejoin="round" stroke-linecap="round">
<path stroke="#76b7b2" d="M818.2 638.1L820.4 657.1L825.2 680.3L829.6 643.9L832.2 640.7L834.5 643.5L837.2 628.6L839.3 634.5L841.9 653.9L844.0 647.4L849.0 589.8L852.8 600.8L856.0 609.6L858.3 641.2L861.3 625.4L865.7 588.1L868.0 594.6L875.0 653.2L877.1 646.9L879.7 620.1L882.4 609.5L884.5 579.3L886.8 607.8L889.4 622.7L892.1 630.3L894.2 665.0L896.5 573.5L898.9 561.7L901.2 625.9L903.5 627.1L905.8 632.4L908.3 656.5L910.5 654.8L912.8 633.3L915.3 630.7L918.1 621.3L920.6 625.0L922.5 632.4L925.1 659.3L929.0 591.1L932.0 590.2L936.6 595.7L939.1 593.9L941.5 612.1L943.9 577.1L946.4 597.2L948.8 590.2L951.2 625.3L953.4 619.4L955.7 615.8L958.3 635.3L960.7 591.7L963.2 619.4L968.0 574.7L970.4 583.8L974.9 649.2L977.5 647.7L982.2 536.4L984.4 551.9L989.0 603.0L991.7 659.6L998.6 559.2L1001.2 596.6L1003.6 577.8L1008.1 651.4L1013.2 598.4L1015.4 604.8L1017.8 571.1L1020.2 634.9L1022.6 598.4L1024.9 622.7L1029.7 582.0L1034.6 604.5L1039.2 599.4L1041.5 643.2L1048.6 584.8L1051.0 586.9L1053.8 592.4L1058.2 653.4L1062.8 562.8L1065.3 547.0L1067.5 569.6L1070.1 574.7L1072.4 592.1L1074.6 567.0L1077.2 582.8L1079.4 490.3L1081.8 497.6L1084.3 489.6L1086.5 541.6L1089.0 568.7L1091.6 615.1L1096.2 543.3L1098.7 600.9L1100.9 601.0L1103.5 595.0L1106.0 618.8L1110.2 625.9L1112.8 587.7L1115.0 595.0L1117.5 600.9L1119.9 592.0L1122.4 599.3L1124.6 667.1L1129.2 612.0L1131.8 601.6L1134.2 611.4L1139.1 571.3L1141.6 651.4L1146.3 556.9L1148.4 565.4L1153.5 616.3L1156.0 614.6L1158.0 652.7L1165.3 578.6L1172.1 649.7L1176.7 642.9L1180.0 626.9L1186.7 599.2L1188.5 610.7L1192.0 693.5L1198.6 579.8L1200.8 627.3L1202.6 624.9L1205.5 611.7L1207.9 645.7L1212.7 611.1L1215.0 613.2L1217.4 619.8L1220.0 623.9L1222.4 632.0L1224.9 646.1L1227.5 646.5L1229.5 618.8L1231.9 618.2L1234.2 622.9L1237.0 637.0L1239.2 666.9L1241.2 665.3L1244.3 644.1L1248.7 613.8L1250.7 621.9L1253.4 624.5L1255.8 661.3L1258.8 653.2L1262.9 624.9L1265.3 619.8L1267.5 595.6L1269.9 602.2L1272.6 600.6L1274.6 611.7L1277.2 564.3L1279.6 592.5L1282.1 604.3L1284.3 599.2L1287.1 609.7L1289.1 610.7L1291.2 646.1L1293.6 610.7L1303.3 570.3L1307.9 614.2L1312.8 600.2L1318.0 604.3L1320.1 606.7L1322.5 626.9L1324.7 560.2L1327.1 667.7"/>
<path stroke="#f28e2b" d="M817.9 704.2L824.0 710.9L827.8 710.5L829.7 699.5L832.1 698.5L836.9 698.5L839.2 702.8L842.6 701.8L846.4 692.8L851.2 696.1L856.0 687.0L858.4 695.2L860.8 694.2L865.5 685.6L869.4 694.2L871.8 696.1L876.1 706.6L878.9 699.0L881.8 696.1L884.7 685.1L888.0 699.0L890.4 706.6L893.3 710.5L896.6 696.6L899.0 697.5L901.4 703.8L905.2 704.2L908.6 709.5L911.9 706.6L914.3 705.7L920.0 698.5L922.9 701.8L924.8 700.9L929.1 687.5L932.0 688.0L934.7 686.1L936.5 689.5L940.3 699.9L944.1 685.1L946.5 694.2L948.9 690.9L951.3 705.7L953.7 697.1L956.1 699.5L958.5 702.8L960.7 677.9L963.7 691.3L968.0 672.7L970.4 679.9L975.0 702.8L982.4 661.2L985.2 667.4L991.9 703.8L998.6 673.6L1001.0 686.5L1003.4 678.9L1005.8 691.3L1008.7 704.7L1013.0 694.7L1015.4 696.1L1017.7 688.9L1020.1 697.1L1024.4 689.9L1027.8 696.1L1032.1 694.2L1035.0 701.8L1038.8 693.7L1042.1 704.7L1049.8 685.6L1053.6 691.3L1056.9 709.5L1058.5 708.6L1063.1 666.3L1067.5 690.0L1071.3 691.7L1076.0 676.4L1078.9 679.0L1083.1 672.7L1089.0 695.1L1091.6 701.9L1094.6 672.7L1096.7 676.4L1100.4 701.0L1103.5 697.6L1107.7 695.1L1110.2 700.2L1114.5 694.2L1117.5 698.5L1121.3 688.3L1124.6 707.8L1127.2 665.4L1129.4 681.5L1132.3 684.9L1134.8 693.4L1139.1 673.1L1141.6 700.2L1146.3 666.6L1150.9 688.3L1156.0 697.6L1158.5 706.9L1162.8 701.9L1169.9 686.6L1173.0 703.6L1176.7 701.9L1180.0 702.3L1182.3 703.4L1186.6 687.5L1189.1 692.6L1192.5 710.8L1198.2 696.0L1201.1 706.3L1205.6 700.6L1209.9 708.6L1212.8 696.6L1217.6 700.6L1222.7 704.0L1227.9 705.1L1231.9 694.9L1236.4 704.0L1240.4 710.3L1246.1 705.1L1251.2 701.2L1255.8 708.6L1259.8 709.1L1262.6 701.2L1264.9 702.9L1267.5 689.8L1270.6 691.5L1276.9 669.2L1280.3 684.6L1284.3 676.1L1286.6 677.2L1290.0 690.3L1293.4 665.3L1296.0 677.8L1298.5 671.0L1303.1 684.6L1305.4 678.9L1307.9 688.1L1310.5 675.5L1313.9 690.3L1317.7 689.2L1321.3 693.8L1324.7 685.8L1327.6 697.7"/>
<path stroke="#4e79a7" d="M817.9 705.2L820.6 710.5L824.0 712.8L825.9 711.4L828.7 705.2L831.1 704.2L833.5 703.8L836.9 700.4L839.2 706.6L842.6 703.8L845.0 702.8L848.8 689.9L851.2 694.7L856.0 689.4L858.4 699.5L860.8 696.6L863.1 697.1L865.5 690.4L867.9 697.5L870.3 701.8L875.1 709.0L877.5 709.0L879.9 703.8L882.3 699.9L884.7 691.8L887.0 703.8L889.4 710.0L891.8 711.4L894.2 713.3L896.6 701.8L899.0 705.7L901.4 710.0L903.8 710.0L906.2 708.1L908.6 712.4L911.0 710.0L914.3 709.5L916.7 707.6L920.0 703.8L922.4 706.6L924.8 707.1L927.2 697.1L929.6 691.3L932.3 693.2L934.7 690.9L936.5 695.5L938.9 701.8L941.5 705.7L944.1 686.1L946.5 700.9L948.9 693.2L951.3 709.0L953.7 701.8L956.1 703.8L958.5 705.2L960.7 680.3L963.2 695.2L965.6 697.1L968.0 679.4L970.4 688.5L972.8 702.8L975.0 707.1L977.6 701.8L980.0 686.5L982.4 666.5L984.8 684.6L987.1 695.2L991.5 712.4L993.8 706.6L996.2 693.2L998.6 681.3L1001.0 695.2L1003.4 687.5L1005.8 700.9L1008.2 710.9L1010.6 705.2L1013.0 700.4L1015.4 704.7L1017.7 698.0L1020.1 704.7L1024.4 700.9L1027.8 703.8L1032.1 698.0L1034.5 709.5L1038.8 701.4L1041.6 709.5L1044.0 706.6L1047.4 697.1L1049.8 693.2L1052.2 695.2L1054.5 704.7L1056.3 714.6L1058.8 712.4L1063.1 673.6L1067.5 697.1L1070.1 695.9L1072.4 702.7L1075.0 688.3L1077.2 686.6L1079.4 690.0L1081.8 676.4L1084.3 676.1L1089.0 701.0L1091.6 705.3L1094.1 678.1L1096.2 679.0L1098.7 705.3L1100.9 706.9L1103.5 701.9L1106.0 701.0L1108.2 697.6L1110.2 706.9L1112.8 698.5L1115.0 699.3L1117.5 704.4L1119.9 695.1L1122.4 691.7L1124.6 702.7L1127.2 672.2L1129.4 678.1L1131.8 680.7L1134.3 697.6L1136.5 693.4L1139.1 682.4L1141.6 708.6L1144.1 681.5L1146.3 671.4L1148.7 682.4L1153.5 701.0L1156.0 702.7L1158.0 711.2L1160.6 706.9L1162.8 706.9L1165.3 698.5L1167.5 691.7L1169.9 690.0L1172.1 708.6L1174.6 706.1L1176.7 707.8L1180.0 708.6L1182.3 709.1L1184.6 705.1L1186.8 693.2L1189.1 698.3L1191.4 714.3L1196.0 709.7L1198.2 704.0L1200.7 710.3L1203.4 706.9L1205.6 705.1L1207.9 708.0L1210.2 714.3L1212.8 697.2L1215.3 702.9L1217.6 704.0L1222.4 709.1L1225.0 708.0L1228.4 707.4L1231.9 701.7L1234.1 706.9L1236.4 710.8L1240.4 713.1L1243.8 711.4L1248.4 709.1L1252.9 710.8L1258.6 713.1L1260.9 712.0L1262.6 707.4L1264.9 704.6L1267.2 692.0L1270.0 693.8L1272.3 692.6L1274.6 686.3L1276.9 676.1L1279.7 690.9L1282.0 693.2L1284.3 685.8L1286.6 686.3L1288.8 694.9L1291.1 705.1L1293.4 669.2L1296.0 692.0L1298.5 678.4L1300.8 683.5L1303.1 692.0L1305.4 686.9L1307.9 698.3L1310.5 678.9L1312.8 694.9L1315.1 696.6L1317.7 691.5L1320.2 696.6L1322.5 699.4L1324.7 698.9L1327.0 701.7"/>
</g><!--LE-->
</svg>
<div class="abs al" style="left:768px;top:479.5px">8K</div>
<div class="abs al" style="left:768px;top:535px">6K</div>
<div class="abs al" style="left:768px;top:594px">4K</div>
<div class="abs al" style="left:768px;top:652px">2K</div>
<div class="abs al" style="left:768px;top:711px">0K</div>
<div class="abs at" style="left:1056px;top:742px;">Week</div>
<div class="abs at" style="left:746px;top:600px;transform-origin:50% 50%;transform:translate(-50%,-50%) rotate(-90deg) scaleX(1.05)">Number of Records</div>
<div class="abs" id="foot"></div>
</body></html>
